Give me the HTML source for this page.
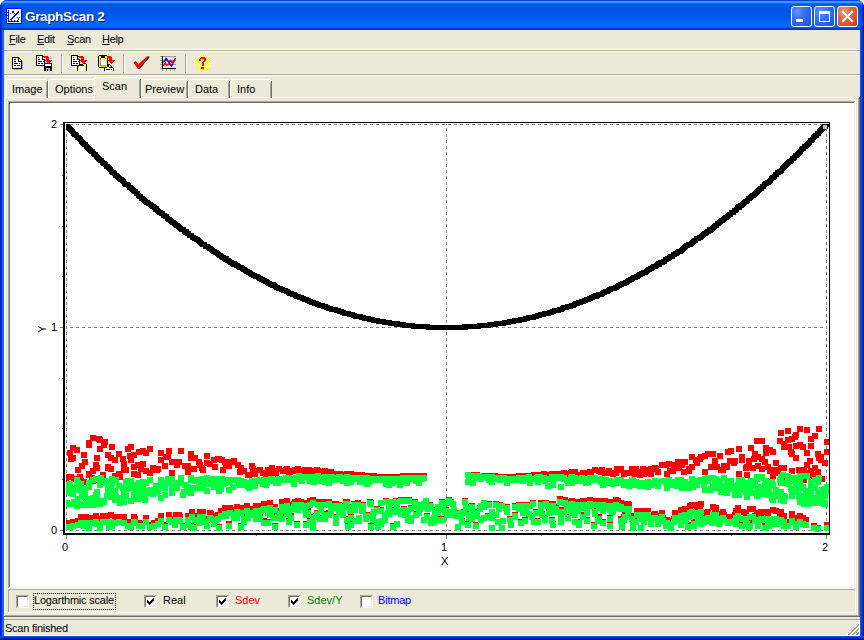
<!DOCTYPE html>
<html><head><meta charset="utf-8">
<style>
*{margin:0;padding:0;box-sizing:border-box}
html,body{width:864px;height:640px;overflow:hidden;background:linear-gradient(to right,#fff 50%,#ECE9D8 50%);font-family:"Liberation Sans",sans-serif;font-size:11px;color:#000}
.a{position:absolute}
#win{position:absolute;left:0;top:0;width:864px;height:640px;border-radius:7px 7px 0 0;overflow:hidden;background:#0831D9}
#title{position:absolute;left:0;top:0;width:864px;height:30px;
background:linear-gradient(to bottom,#0A46D9 0px,#0A46D9 1px,#3D95FF 1px,#3D95FF 3px,#0A6AF0 3px,#0058E8 5px,#0055E5 9px,#0058EA 16px,#0062F8 21px,#0066FF 23px,#0066FF 27px,#0050E0 28px,#0034C8 29px,#0034C8 30px)}
#lb{position:absolute;left:0;top:30px;width:4px;height:610px;background:linear-gradient(to right,#0019CF 0,#0019CF 1px,#0831D9 1px,#0831D9 2px,#166AEE 2px,#166AEE 3px,#1D5FE9 3px)}
#rb{position:absolute;left:860px;top:30px;width:4px;height:610px;background:linear-gradient(to right,#0A4BEA 0,#0A4BEA 1px,#0A45E6 1px,#0A45E6 2px,#0030C8 2px,#0030C8 3px,#001888 3px)}
#bb{position:absolute;left:0;top:636px;width:864px;height:4px;background:linear-gradient(to bottom,#0A4BEA 0,#0A4BEA 1px,#0837D8 1px,#0837D8 2px,#0020B0 2px,#0020B0 3px,#00138A 3px)}
#client{position:absolute;left:4px;top:30px;width:856px;height:606px;background:#ECE9D8}
.ttl{position:absolute;left:25px;top:9px;font-weight:bold;font-size:13.5px;letter-spacing:-0.35px;color:#fff;text-shadow:1px 1px 0 #0A1883}
.m{position:absolute;top:3px;white-space:nowrap;letter-spacing:-0.3px}
.u{text-decoration:underline;text-underline-offset:1px}
.hl{position:absolute;height:1px}
.vl{position:absolute;width:1px}
.tab{position:absolute;top:79px;height:19px;border-top:1px solid #fff;border-left:1px solid #fff;border-radius:2px 0 0 0}
.tab i{position:absolute;right:-1px;top:1px;bottom:0;width:1px;background:#716F64}
.tab i:before{content:"";position:absolute;left:-1px;top:1px;bottom:0;width:1px;background:#ACA899}
.tab span{position:absolute;top:3px;white-space:nowrap}
.cb{position:absolute;width:13px;height:13px;border-top:1px solid #ACA899;border-left:1px solid #ACA899;border-right:1px solid #fff;border-bottom:1px solid #fff;background:#fff}
.cb:before{content:"";position:absolute;left:0;top:0;right:0;bottom:0;border-top:1px solid #716F64;border-left:1px solid #716F64;border-right:1px solid #F1EFE2;border-bottom:1px solid #F1EFE2}
.lbl{position:absolute;white-space:nowrap}
</style></head><body>
<div id="win">
<div id="title">
 <svg class="a" style="left:6px;top:8px" width="16" height="16" viewBox="0 0 16 16" shape-rendering="crispEdges">
  <rect x="0" y="0" width="16" height="16" fill="#0000F0"/>
  <rect x="1" y="1" width="14" height="14" fill="#fff"/>
  <path fill="#0000F0" d="M1 4h1v1h-1zM1 7h1v1h-1zM1 10h1v1h-1zM2 2h1v12h-1zM2 13h11v1h-11zM5 12h1v1h-1zM8 12h1v1h-1zM11 12h1v1h-1zM4 11h2v1h-2zM5 10h2v1h-2zM6 9h2v1h-2zM7 8h2v1h-2zM8 7h2v1h-2zM9 6h2v1h-2zM10 5h2v1h-2zM11 4h2v1h-2zM12 3h1v1h-1zM6 3h2v2h-2zM4 5h1v1h-1zM8 5h1v1h-1zM11 9h1v1h-1zM13 9h1v1h-1zM12 10h1v2h-1z"/>
 </svg>
 <div class="ttl">GraphScan 2</div>
 <!-- buttons -->
 <div class="a" style="left:791px;top:6px;width:21px;height:21px;border:1px solid #fff;border-radius:3px;background:radial-gradient(circle at 30% 25%,#5F95FB 0%,#3A74F2 35%,#2159E8 80%,#1A4FDB 100%)"></div>
 <div class="a" style="left:796px;top:19px;width:7px;height:3px;background:#fff"></div>
 <div class="a" style="left:814px;top:6px;width:21px;height:21px;border:1px solid #fff;border-radius:3px;background:radial-gradient(circle at 30% 25%,#5F95FB 0%,#3A74F2 35%,#2159E8 80%,#1A4FDB 100%)"></div>
 <div class="a" style="left:819px;top:11px;width:11px;height:11px;border:1px solid #fff;border-top-width:3px"></div>
 <div class="a" style="left:837px;top:6px;width:21px;height:21px;border:1px solid #fff;border-radius:3px;background:radial-gradient(circle at 30% 25%,#EC9A80 0%,#E16C4C 35%,#D44A22 80%,#C0380F 100%)"></div>
 <svg class="a" style="left:837px;top:6px" width="21" height="21" viewBox="0 0 21 21"><path d="M6 6L15 15M15 6L6 15" stroke="#fff" stroke-width="2" stroke-linecap="square"/></svg>
</div>
<div class="a" style="left:0;top:5px;width:5px;height:25px;background:linear-gradient(to right,rgba(0,25,200,0.9),rgba(0,40,210,0.5) 2px,rgba(0,60,220,0) 5px)"></div>
<div class="a" style="left:859px;top:5px;width:5px;height:25px;background:linear-gradient(to left,rgba(0,16,140,0.9),rgba(0,40,200,0.5) 2px,rgba(0,60,220,0) 5px)"></div>
<div id="lb"></div><div id="rb"></div><div id="bb"></div>
<div id="client"></div>
<!-- corners outside window -->
<!-- menu bar -->
<div class="m" style="left:9px;top:33px"><span class="u">F</span>ile</div>
<div class="m" style="left:37px;top:33px"><span class="u">E</span>dit</div>
<div class="m" style="left:67px;top:33px"><span class="u">S</span>can</div>
<div class="m" style="left:102px;top:33px"><span class="u">H</span>elp</div>
<div class="hl" style="left:4px;top:49px;width:856px;background:#fff"></div>
<div class="hl" style="left:4px;top:50px;width:856px;background:#ACA899"></div>
<div class="hl" style="left:4px;top:51px;width:856px;background:#fff"></div>
<!-- toolbar bottom -->
<div class="hl" style="left:4px;top:74px;width:856px;background:#ACA899"></div>
<div class="hl" style="left:4px;top:75px;width:856px;background:#fff"></div>
<!-- toolbar separators -->
<div class="vl" style="left:61px;top:54px;height:19px;background:#ACA899"></div>
<div class="vl" style="left:62px;top:54px;height:19px;background:#fff"></div>
<div class="vl" style="left:123px;top:54px;height:19px;background:#ACA899"></div>
<div class="vl" style="left:124px;top:54px;height:19px;background:#fff"></div>
<div class="vl" style="left:185px;top:54px;height:19px;background:#ACA899"></div>
<div class="vl" style="left:186px;top:54px;height:19px;background:#fff"></div>
<svg class="a" style="left:0;top:50px" width="220" height="24" viewBox="0 50 220 24" shape-rendering="crispEdges">
 <defs>
  <pattern id="chk" width="2" height="2" patternUnits="userSpaceOnUse"><rect width="2" height="2" fill="#fff"/><rect width="1" height="1" fill="#FF0"/><rect x="1" y="1" width="1" height="1" fill="#FF0"/></pattern>
 </defs>
 <!-- icon1 new -->
 <path fill="#FFFF00" d="M9 55h1v1h-1zM10 56h1v1h-1zM11 57h1v1h-1zM16 55h1v2h-1zM24 55h1v1h-1zM23 56h1v1h-1zM22 57h1v1h-1zM21 58h1v1h-1zM9 63h3v1h-3zM22 63h3v1h-3zM10 69h1v1h-1zM11 68h1v1h-1zM16 69h2v2h-2zM22 68h1v1h-1zM23 69h1v1h-1zM24 70h1v1h-1z"/>
 <path fill="#A8A8C0" d="M13 69h10v1h-10zM22 61h1v8h-1z"/>
 <path fill="#fff" d="M13 58h5v10h-5zM18 61h3v7h-3zM19 59h1v2h-1z"/>
 <path fill="#000" d="M12 57h7v1h-7zM12 57h1v12h-1zM12 68h10v1h-10zM21 61h1v8h-1zM19 58h1v1h-1zM20 59h1v1h-1zM21 60h1v1h-1zM18 58h1v3h-1zM18 61h3v1h-3zM14 59h2v1h-2zM14 61h2v1h-2zM14 63h4v1h-4zM19 63h1v1h-1zM14 65h2v1h-2zM17 65h3v1h-3z"/>
 <!-- icon2 save -->
 <path fill="#fff" d="M37 56h5v9h-5zM42 59h2v6h-2zM42 57h1v2h-1z"/>
 <path fill="#000" d="M36 55h7v1h-7zM36 55h1v11h-1zM36 65h8v1h-8zM43 56h1v1h-1zM44 57h1v1h-1zM42 56h1v3h-1zM42 59h3v1h-3zM44 59h1v4h-1zM38 57h1v1h-1zM38 59h2v1h-2zM38 61h4v1h-4zM43 61h1v1h-1zM38 63h2v1h-2zM41 63h2v1h-2z"/>
 <path fill="#FF0000" d="M44 56h4v2h-4zM46 57h3v3h-3zM45 60h7v1h-7zM46 61h5v1h-5zM47 62h3v1h-3zM48 63h1v1h-1z"/>
 <path fill="#000" d="M44 63h8v8h-8z"/>
 <path fill="#0000FF" d="M45 63h3v1h-3zM49 63h2v1h-2z"/>
 <path fill="#FF0000" d="M48 63h1v1h-1z"/>
 <path fill="#fff" d="M45 64h6v2h-6z"/>
 <path fill="#B8B8B8" d="M46 68h4v3h-4z"/>
 <path fill="#000" d="M47 69h1v2h-1z"/>
 <!-- icon3 -->
 <path fill="#fff" d="M72 56h5v9h-5zM77 59h2v6h-2zM77 57h1v2h-1z"/>
 <path fill="#000" d="M71 55h7v1h-7zM71 55h1v11h-1zM71 65h8v1h-8zM78 56h1v1h-1zM79 57h1v1h-1zM77 56h1v3h-1zM77 59h3v1h-3zM79 59h1v7h-1zM73 57h1v1h-1zM73 59h2v1h-2zM73 61h4v1h-4zM78 61h1v1h-1zM73 63h2v1h-2zM76 63h2v1h-2z"/>
 <path fill="#FF0000" d="M79 56h4v2h-4zM81 57h3v3h-3zM80 60h7v1h-7zM81 61h5v1h-5zM82 62h3v1h-3zM83 63h1v1h-1z"/>
 <path fill="#000" d="M77 66h1v5h-1zM80 64h3v2h-3zM84 63h2v1h-2zM86 64h1v7h-1zM82 65h2v1h-2z"/>
 <path fill="#FFFF00" d="M78 66h1v5h-1zM85 64h1v7h-1zM84 64h1v1h-1z"/>
 <path fill="#fff" d="M79 66h6v5h-6z"/>
 <!-- icon4 clipboard -->
 <path fill="#000" d="M99 55h8v1h-8zM98 56h1v11h-1zM107 56h1v11h-1zM99 67h8v1h-8zM101 56h4v2h-4z"/>
 <path fill="#FFFF00" d="M99 56h2v2h-2zM105 56h2v2h-2zM99 58h8v9h-8z"/>
 <path fill="#8888B0" d="M100 58h1v1h-1zM105 58h1v1h-1zM100 59h1v7h-1zM100 65h6v1h-6z"/>
 <path fill="#fff" d="M101 59h5v6h-5z"/>
 <path fill="#FF0000" d="M107 56h4v2h-4zM109 57h3v3h-3zM108 60h7v1h-7zM109 61h5v1h-5zM110 62h3v1h-3zM111 63h1v1h-1z"/>
 <path fill="#fff" d="M105 68h8v3h-8zM108 65h3v3h-3z"/>
 <path fill="#000" d="M104 68h1v3h-1zM104 67h2v1h-2zM108 64h2v1h-2zM110 65h1v1h-1zM111 66h1v1h-1zM112 67h1v1h-1zM113 68h1v3h-1zM108 64h1v3h-1zM106 69h4v1h-4zM111 69h1v1h-1zM109 67h3v1h-3z"/>
 <path fill="#fff" d="M109 65h1v2h-1zM110 66h1v1h-1z"/>
 <!-- check -->
 <path d="M133.5 62.5L135.5 61L138.3 64.2L147.2 56.2L149.3 56.3L139.3 68.3L137.6 68.6Z" fill="#000" shape-rendering="geometricPrecision" transform="translate(0.6,0.5)"/>
 <path d="M133.5 62.5L135.5 61L138.3 64.2L147.2 56.2L149.3 56.3L139.3 68.3L137.6 68.6Z" fill="#FF0000" shape-rendering="geometricPrecision"/>
 <!-- chart icon -->
 <path fill="#999" d="M160 56h16v1h-16zM160 60h16v1h-16zM160 64h16v1h-16zM160 68h16v1h-16zM162 69h1v2h-1zM166 69h1v2h-1zM170 69h1v2h-1zM174 69h1v2h-1zM161 58h1v1h-1zM161 62h1v1h-1zM161 66h1v1h-1z"/>
 <path fill="#000" d="M162 56h1v13h-1zM162 68h14v1h-14z"/>
 <path d="M163.5 62.5L165 60.5L166 58.5L167.5 60.5L169 62.5L170.5 65L171.5 66L172.5 64L173.5 62L174.5 60L175.5 58" fill="none" stroke="#0000FF" stroke-width="1.5" shape-rendering="geometricPrecision"/>
 <path d="M163.5 66L164.5 64L165.5 63L166.5 65L168 65L169 62.5L170.5 60.5L171.5 61.5L172.5 63L173.5 61L175 60" fill="none" stroke="#FF0000" stroke-width="1.5" shape-rendering="geometricPrecision"/>
 <!-- help -->
 <path fill="url(#chk)" d="M200 55h5v1h2v1h1v1h1v1h1v2h1v5h-1v2h-1v1h-1v1h-1v1h-2v1h-5v-1h-2v-1h-1v-1h-1v-1h-1v-2h-1v-5h1v-2h1v-1h1v-1h1v-1h2z"/>
 <path fill="#FF0000" d="M201 57h4v1h-4zM200 58h6v1h-6zM199 59h2v2h-2zM204 59h2v2h-2zM203 61h2v1h-2zM202 62h2v1h-2zM202 63h2v3h-2zM201 67h3v2h-3z"/>
</svg>
<!-- tab page border -->
<div class="hl" style="left:4px;top:97px;width:90px;background:#fff"></div>
<div class="hl" style="left:140px;top:97px;width:719px;background:#fff"></div>
<div class="vl" style="left:4px;top:97px;height:519px;background:#fff"></div>
<div class="vl" style="left:858px;top:98px;height:518px;background:#ACA899"></div>
<div class="vl" style="left:859px;top:97px;height:520px;background:#716F64"></div>
<div class="hl" style="left:5px;top:615px;width:854px;background:#ACA899"></div>
<div class="hl" style="left:4px;top:616px;width:856px;background:#716F64"></div>
<!-- tabs -->
<div class="tab" style="left:6px;width:41px"><i></i><span style="left:5px">Image</span></div>
<div class="tab" style="left:48px;width:46px"><span style="left:6px">Options</span></div>
<div class="tab" style="left:141px;width:46px"><i></i><span style="left:3px">Preview</span></div>
<div class="tab" style="left:188px;width:41px"><i></i><span style="left:6px">Data</span></div>
<div class="tab" style="left:230px;width:41px"><i></i><span style="left:6px">Info</span></div>
<div class="tab" style="left:94px;top:77px;width:46px;height:21px;background:#ECE9D8"><i style="background:#716F64"></i><span style="left:7px;top:2px">Scan</span></div>
<!-- chart sunken frame -->
<div class="hl" style="left:8px;top:101px;width:847px;background:#ACA899"></div>
<div class="vl" style="left:8px;top:101px;height:487px;background:#ACA899"></div>
<div class="hl" style="left:9px;top:102px;width:845px;background:#716F64"></div>
<div class="vl" style="left:9px;top:102px;height:485px;background:#716F64"></div>
<div class="hl" style="left:8px;top:588px;width:848px;background:#fff"></div>
<div class="vl" style="left:855px;top:101px;height:488px;background:#fff"></div>
<div class="hl" style="left:9px;top:587px;width:846px;background:#F1EFE2"></div>
<div class="vl" style="left:854px;top:102px;height:486px;background:#F1EFE2"></div>
<div class="a" style="left:10px;top:103px;width:844px;height:484px;background:#fff"></div>
<!-- checkbox panel -->
<div class="hl" style="left:8px;top:589px;width:847px;background:#ACA899"></div>
<div class="vl" style="left:8px;top:589px;height:23px;background:#ACA899"></div>
<div class="hl" style="left:8px;top:612px;width:848px;background:#fff"></div>
<div class="vl" style="left:855px;top:589px;height:24px;background:#fff"></div>
<div class="cb" style="left:16px;top:595px"></div>
<div class="a" style="left:33px;top:593px;width:83px;height:17px;border:1px dotted #000"></div>
<div class="lbl" style="left:34px;top:594px;letter-spacing:-0.2px">Logarthmic scale</div>
<div class="cb" style="left:144px;top:595px"><svg class="a" style="left:2px;top:2px" width="7" height="7" viewBox="0 0 7 7" shape-rendering="crispEdges"><path d="M0 2h1v3h-1zM1 3h1v3h-1zM2 4h1v3h-1zM3 3h1v3h-1zM4 2h1v3h-1zM5 1h1v3h-1zM6 0h1v3h-1z"/></svg></div>
<div class="lbl" style="left:163px;top:594px">Real</div>
<div class="cb" style="left:216px;top:595px"><svg class="a" style="left:2px;top:2px" width="7" height="7" viewBox="0 0 7 7" shape-rendering="crispEdges"><path d="M0 2h1v3h-1zM1 3h1v3h-1zM2 4h1v3h-1zM3 3h1v3h-1zM4 2h1v3h-1zM5 1h1v3h-1zM6 0h1v3h-1z"/></svg></div>
<div class="lbl" style="left:235px;top:594px;color:#FF0000">Sdev</div>
<div class="cb" style="left:288px;top:595px"><svg class="a" style="left:2px;top:2px" width="7" height="7" viewBox="0 0 7 7" shape-rendering="crispEdges"><path d="M0 2h1v3h-1zM1 3h1v3h-1zM2 4h1v3h-1zM3 3h1v3h-1zM4 2h1v3h-1zM5 1h1v3h-1zM6 0h1v3h-1z"/></svg></div>
<div class="lbl" style="left:307px;top:594px;color:#008000">Sdev/Y</div>
<div class="cb" style="left:360px;top:595px"></div>
<div class="lbl" style="left:378px;top:594px;color:#0000FF;letter-spacing:-0.2px">Bitmap</div>
<!-- status bar -->
<div class="hl" style="left:4px;top:619px;width:856px;background:#ACA899"></div>
<div class="hl" style="left:4px;top:635px;width:856px;background:#fff"></div>
<div class="lbl" style="left:5px;top:622px;letter-spacing:-0.25px">Scan finished</div>
<svg class="a" style="left:0;top:0" width="864" height="640" viewBox="0 0 864 640" shape-rendering="crispEdges"><path fill="#fff" d="M847 634h1v1h-1zM848 633h1v1h-1zM849 632h1v1h-1zM850 631h1v1h-1zM851 630h1v1h-1zM852 629h1v1h-1zM853 628h1v1h-1zM854 627h1v1h-1zM855 626h1v1h-1zM856 625h1v1h-1zM857 624h1v1h-1zM858 623h1v1h-1zM851 634h1v1h-1zM852 633h1v1h-1zM853 632h1v1h-1zM854 631h1v1h-1zM855 630h1v1h-1zM856 629h1v1h-1zM857 628h1v1h-1zM858 627h1v1h-1zM855 634h1v1h-1zM856 633h1v1h-1zM857 632h1v1h-1zM858 631h1v1h-1zM859 620h1v15h-1z"/><path fill="#ACA899" d="M848 634h1v1h-1zM849 634h1v1h-1zM849 633h1v1h-1zM850 633h1v1h-1zM850 632h1v1h-1zM851 632h1v1h-1zM851 631h1v1h-1zM852 631h1v1h-1zM852 630h1v1h-1zM853 630h1v1h-1zM853 629h1v1h-1zM854 629h1v1h-1zM854 628h1v1h-1zM855 628h1v1h-1zM855 627h1v1h-1zM856 627h1v1h-1zM856 626h1v1h-1zM857 626h1v1h-1zM857 625h1v1h-1zM858 625h1v1h-1zM858 624h1v1h-1zM852 634h1v1h-1zM853 634h1v1h-1zM853 633h1v1h-1zM854 633h1v1h-1zM854 632h1v1h-1zM855 632h1v1h-1zM855 631h1v1h-1zM856 631h1v1h-1zM856 630h1v1h-1zM857 630h1v1h-1zM857 629h1v1h-1zM858 629h1v1h-1zM858 628h1v1h-1zM856 634h1v1h-1zM857 634h1v1h-1zM857 633h1v1h-1zM858 633h1v1h-1zM858 632h1v1h-1z"/></svg>
<svg class="a" style="left:0;top:0" width="864" height="640" viewBox="0 0 864 640" shape-rendering="crispEdges">
<defs><clipPath id="pc"><rect x="66" y="124" width="763" height="409"/></clipPath></defs>
<path fill="#808080" d="M70 124h3v1h-3zM76 124h3v1h-3zM82 124h3v1h-3zM88 124h3v1h-3zM94 124h3v1h-3zM100 124h3v1h-3zM106 124h3v1h-3zM112 124h3v1h-3zM118 124h3v1h-3zM124 124h3v1h-3zM130 124h3v1h-3zM136 124h3v1h-3zM142 124h3v1h-3zM148 124h3v1h-3zM154 124h3v1h-3zM160 124h3v1h-3zM166 124h3v1h-3zM172 124h3v1h-3zM178 124h3v1h-3zM184 124h3v1h-3zM190 124h3v1h-3zM196 124h3v1h-3zM202 124h3v1h-3zM208 124h3v1h-3zM214 124h3v1h-3zM220 124h3v1h-3zM226 124h3v1h-3zM232 124h3v1h-3zM238 124h3v1h-3zM244 124h3v1h-3zM250 124h3v1h-3zM256 124h3v1h-3zM262 124h3v1h-3zM268 124h3v1h-3zM274 124h3v1h-3zM280 124h3v1h-3zM286 124h3v1h-3zM292 124h3v1h-3zM298 124h3v1h-3zM304 124h3v1h-3zM310 124h3v1h-3zM316 124h3v1h-3zM322 124h3v1h-3zM328 124h3v1h-3zM334 124h3v1h-3zM340 124h3v1h-3zM346 124h3v1h-3zM352 124h3v1h-3zM358 124h3v1h-3zM364 124h3v1h-3zM370 124h3v1h-3zM376 124h3v1h-3zM382 124h3v1h-3zM388 124h3v1h-3zM394 124h3v1h-3zM400 124h3v1h-3zM406 124h3v1h-3zM412 124h3v1h-3zM418 124h3v1h-3zM424 124h3v1h-3zM430 124h3v1h-3zM436 124h3v1h-3zM442 124h3v1h-3zM448 124h3v1h-3zM454 124h3v1h-3zM460 124h3v1h-3zM466 124h3v1h-3zM472 124h3v1h-3zM478 124h3v1h-3zM484 124h3v1h-3zM490 124h3v1h-3zM496 124h3v1h-3zM502 124h3v1h-3zM508 124h3v1h-3zM514 124h3v1h-3zM520 124h3v1h-3zM526 124h3v1h-3zM532 124h3v1h-3zM538 124h3v1h-3zM544 124h3v1h-3zM550 124h3v1h-3zM556 124h3v1h-3zM562 124h3v1h-3zM568 124h3v1h-3zM574 124h3v1h-3zM580 124h3v1h-3zM586 124h3v1h-3zM592 124h3v1h-3zM598 124h3v1h-3zM604 124h3v1h-3zM610 124h3v1h-3zM616 124h3v1h-3zM622 124h3v1h-3zM628 124h3v1h-3zM634 124h3v1h-3zM640 124h3v1h-3zM646 124h3v1h-3zM652 124h3v1h-3zM658 124h3v1h-3zM664 124h3v1h-3zM670 124h3v1h-3zM676 124h3v1h-3zM682 124h3v1h-3zM688 124h3v1h-3zM694 124h3v1h-3zM700 124h3v1h-3zM706 124h3v1h-3zM712 124h3v1h-3zM718 124h3v1h-3zM724 124h3v1h-3zM730 124h3v1h-3zM736 124h3v1h-3zM742 124h3v1h-3zM748 124h3v1h-3zM754 124h3v1h-3zM760 124h3v1h-3zM766 124h3v1h-3zM772 124h3v1h-3zM778 124h3v1h-3zM784 124h3v1h-3zM790 124h3v1h-3zM796 124h3v1h-3zM802 124h3v1h-3zM808 124h3v1h-3zM814 124h3v1h-3zM820 124h3v1h-3zM826 124h1v1h-1zM70 327h3v1h-3zM76 327h3v1h-3zM82 327h3v1h-3zM88 327h3v1h-3zM94 327h3v1h-3zM100 327h3v1h-3zM106 327h3v1h-3zM112 327h3v1h-3zM118 327h3v1h-3zM124 327h3v1h-3zM130 327h3v1h-3zM136 327h3v1h-3zM142 327h3v1h-3zM148 327h3v1h-3zM154 327h3v1h-3zM160 327h3v1h-3zM166 327h3v1h-3zM172 327h3v1h-3zM178 327h3v1h-3zM184 327h3v1h-3zM190 327h3v1h-3zM196 327h3v1h-3zM202 327h3v1h-3zM208 327h3v1h-3zM214 327h3v1h-3zM220 327h3v1h-3zM226 327h3v1h-3zM232 327h3v1h-3zM238 327h3v1h-3zM244 327h3v1h-3zM250 327h3v1h-3zM256 327h3v1h-3zM262 327h3v1h-3zM268 327h3v1h-3zM274 327h3v1h-3zM280 327h3v1h-3zM286 327h3v1h-3zM292 327h3v1h-3zM298 327h3v1h-3zM304 327h3v1h-3zM310 327h3v1h-3zM316 327h3v1h-3zM322 327h3v1h-3zM328 327h3v1h-3zM334 327h3v1h-3zM340 327h3v1h-3zM346 327h3v1h-3zM352 327h3v1h-3zM358 327h3v1h-3zM364 327h3v1h-3zM370 327h3v1h-3zM376 327h3v1h-3zM382 327h3v1h-3zM388 327h3v1h-3zM394 327h3v1h-3zM400 327h3v1h-3zM406 327h3v1h-3zM412 327h3v1h-3zM418 327h3v1h-3zM424 327h3v1h-3zM430 327h3v1h-3zM436 327h3v1h-3zM442 327h3v1h-3zM448 327h3v1h-3zM454 327h3v1h-3zM460 327h3v1h-3zM466 327h3v1h-3zM472 327h3v1h-3zM478 327h3v1h-3zM484 327h3v1h-3zM490 327h3v1h-3zM496 327h3v1h-3zM502 327h3v1h-3zM508 327h3v1h-3zM514 327h3v1h-3zM520 327h3v1h-3zM526 327h3v1h-3zM532 327h3v1h-3zM538 327h3v1h-3zM544 327h3v1h-3zM550 327h3v1h-3zM556 327h3v1h-3zM562 327h3v1h-3zM568 327h3v1h-3zM574 327h3v1h-3zM580 327h3v1h-3zM586 327h3v1h-3zM592 327h3v1h-3zM598 327h3v1h-3zM604 327h3v1h-3zM610 327h3v1h-3zM616 327h3v1h-3zM622 327h3v1h-3zM628 327h3v1h-3zM634 327h3v1h-3zM640 327h3v1h-3zM646 327h3v1h-3zM652 327h3v1h-3zM658 327h3v1h-3zM664 327h3v1h-3zM670 327h3v1h-3zM676 327h3v1h-3zM682 327h3v1h-3zM688 327h3v1h-3zM694 327h3v1h-3zM700 327h3v1h-3zM706 327h3v1h-3zM712 327h3v1h-3zM718 327h3v1h-3zM724 327h3v1h-3zM730 327h3v1h-3zM736 327h3v1h-3zM742 327h3v1h-3zM748 327h3v1h-3zM754 327h3v1h-3zM760 327h3v1h-3zM766 327h3v1h-3zM772 327h3v1h-3zM778 327h3v1h-3zM784 327h3v1h-3zM790 327h3v1h-3zM796 327h3v1h-3zM802 327h3v1h-3zM808 327h3v1h-3zM814 327h3v1h-3zM820 327h3v1h-3zM826 327h1v1h-1zM70 530h3v1h-3zM76 530h3v1h-3zM82 530h3v1h-3zM88 530h3v1h-3zM94 530h3v1h-3zM100 530h3v1h-3zM106 530h3v1h-3zM112 530h3v1h-3zM118 530h3v1h-3zM124 530h3v1h-3zM130 530h3v1h-3zM136 530h3v1h-3zM142 530h3v1h-3zM148 530h3v1h-3zM154 530h3v1h-3zM160 530h3v1h-3zM166 530h3v1h-3zM172 530h3v1h-3zM178 530h3v1h-3zM184 530h3v1h-3zM190 530h3v1h-3zM196 530h3v1h-3zM202 530h3v1h-3zM208 530h3v1h-3zM214 530h3v1h-3zM220 530h3v1h-3zM226 530h3v1h-3zM232 530h3v1h-3zM238 530h3v1h-3zM244 530h3v1h-3zM250 530h3v1h-3zM256 530h3v1h-3zM262 530h3v1h-3zM268 530h3v1h-3zM274 530h3v1h-3zM280 530h3v1h-3zM286 530h3v1h-3zM292 530h3v1h-3zM298 530h3v1h-3zM304 530h3v1h-3zM310 530h3v1h-3zM316 530h3v1h-3zM322 530h3v1h-3zM328 530h3v1h-3zM334 530h3v1h-3zM340 530h3v1h-3zM346 530h3v1h-3zM352 530h3v1h-3zM358 530h3v1h-3zM364 530h3v1h-3zM370 530h3v1h-3zM376 530h3v1h-3zM382 530h3v1h-3zM388 530h3v1h-3zM394 530h3v1h-3zM400 530h3v1h-3zM406 530h3v1h-3zM412 530h3v1h-3zM418 530h3v1h-3zM424 530h3v1h-3zM430 530h3v1h-3zM436 530h3v1h-3zM442 530h3v1h-3zM448 530h3v1h-3zM454 530h3v1h-3zM460 530h3v1h-3zM466 530h3v1h-3zM472 530h3v1h-3zM478 530h3v1h-3zM484 530h3v1h-3zM490 530h3v1h-3zM496 530h3v1h-3zM502 530h3v1h-3zM508 530h3v1h-3zM514 530h3v1h-3zM520 530h3v1h-3zM526 530h3v1h-3zM532 530h3v1h-3zM538 530h3v1h-3zM544 530h3v1h-3zM550 530h3v1h-3zM556 530h3v1h-3zM562 530h3v1h-3zM568 530h3v1h-3zM574 530h3v1h-3zM580 530h3v1h-3zM586 530h3v1h-3zM592 530h3v1h-3zM598 530h3v1h-3zM604 530h3v1h-3zM610 530h3v1h-3zM616 530h3v1h-3zM622 530h3v1h-3zM628 530h3v1h-3zM634 530h3v1h-3zM640 530h3v1h-3zM646 530h3v1h-3zM652 530h3v1h-3zM658 530h3v1h-3zM664 530h3v1h-3zM670 530h3v1h-3zM676 530h3v1h-3zM682 530h3v1h-3zM688 530h3v1h-3zM694 530h3v1h-3zM700 530h3v1h-3zM706 530h3v1h-3zM712 530h3v1h-3zM718 530h3v1h-3zM724 530h3v1h-3zM730 530h3v1h-3zM736 530h3v1h-3zM742 530h3v1h-3zM748 530h3v1h-3zM754 530h3v1h-3zM760 530h3v1h-3zM766 530h3v1h-3zM772 530h3v1h-3zM778 530h3v1h-3zM784 530h3v1h-3zM790 530h3v1h-3zM796 530h3v1h-3zM802 530h3v1h-3zM808 530h3v1h-3zM814 530h3v1h-3zM820 530h3v1h-3zM826 530h1v1h-1zM66 124h1v1h-1zM66 128h1v3h-1zM66 134h1v3h-1zM66 140h1v3h-1zM66 146h1v3h-1zM66 152h1v3h-1zM66 158h1v3h-1zM66 164h1v3h-1zM66 170h1v3h-1zM66 176h1v3h-1zM66 182h1v3h-1zM66 188h1v3h-1zM66 194h1v3h-1zM66 200h1v3h-1zM66 206h1v3h-1zM66 212h1v3h-1zM66 218h1v3h-1zM66 224h1v3h-1zM66 230h1v3h-1zM66 236h1v3h-1zM66 242h1v3h-1zM66 248h1v3h-1zM66 254h1v3h-1zM66 260h1v3h-1zM66 266h1v3h-1zM66 272h1v3h-1zM66 278h1v3h-1zM66 284h1v3h-1zM66 290h1v3h-1zM66 296h1v3h-1zM66 302h1v3h-1zM66 308h1v3h-1zM66 314h1v3h-1zM66 320h1v3h-1zM66 326h1v3h-1zM66 332h1v3h-1zM66 338h1v3h-1zM66 344h1v3h-1zM66 350h1v3h-1zM66 356h1v3h-1zM66 362h1v3h-1zM66 368h1v3h-1zM66 374h1v3h-1zM66 380h1v3h-1zM66 386h1v3h-1zM66 392h1v3h-1zM66 398h1v3h-1zM66 404h1v3h-1zM66 410h1v3h-1zM66 416h1v3h-1zM66 422h1v3h-1zM66 428h1v3h-1zM66 434h1v3h-1zM66 440h1v3h-1zM66 446h1v3h-1zM66 452h1v3h-1zM66 458h1v3h-1zM66 464h1v3h-1zM66 470h1v3h-1zM66 476h1v3h-1zM66 482h1v3h-1zM66 488h1v3h-1zM66 494h1v3h-1zM66 500h1v3h-1zM66 506h1v3h-1zM66 512h1v3h-1zM66 518h1v3h-1zM66 524h1v3h-1zM66 530h1v1h-1zM446 124h1v1h-1zM446 128h1v3h-1zM446 134h1v3h-1zM446 140h1v3h-1zM446 146h1v3h-1zM446 152h1v3h-1zM446 158h1v3h-1zM446 164h1v3h-1zM446 170h1v3h-1zM446 176h1v3h-1zM446 182h1v3h-1zM446 188h1v3h-1zM446 194h1v3h-1zM446 200h1v3h-1zM446 206h1v3h-1zM446 212h1v3h-1zM446 218h1v3h-1zM446 224h1v3h-1zM446 230h1v3h-1zM446 236h1v3h-1zM446 242h1v3h-1zM446 248h1v3h-1zM446 254h1v3h-1zM446 260h1v3h-1zM446 266h1v3h-1zM446 272h1v3h-1zM446 278h1v3h-1zM446 284h1v3h-1zM446 290h1v3h-1zM446 296h1v3h-1zM446 302h1v3h-1zM446 308h1v3h-1zM446 314h1v3h-1zM446 320h1v3h-1zM446 326h1v3h-1zM446 332h1v3h-1zM446 338h1v3h-1zM446 344h1v3h-1zM446 350h1v3h-1zM446 356h1v3h-1zM446 362h1v3h-1zM446 368h1v3h-1zM446 374h1v3h-1zM446 380h1v3h-1zM446 386h1v3h-1zM446 392h1v3h-1zM446 398h1v3h-1zM446 404h1v3h-1zM446 410h1v3h-1zM446 416h1v3h-1zM446 422h1v3h-1zM446 428h1v3h-1zM446 434h1v3h-1zM446 440h1v3h-1zM446 446h1v3h-1zM446 452h1v3h-1zM446 458h1v3h-1zM446 464h1v3h-1zM446 470h1v3h-1zM446 476h1v3h-1zM446 482h1v3h-1zM446 488h1v3h-1zM446 494h1v3h-1zM446 500h1v3h-1zM446 506h1v3h-1zM446 512h1v3h-1zM446 518h1v3h-1zM446 524h1v3h-1zM446 530h1v1h-1zM826 124h1v1h-1zM826 128h1v3h-1zM826 134h1v3h-1zM826 140h1v3h-1zM826 146h1v3h-1zM826 152h1v3h-1zM826 158h1v3h-1zM826 164h1v3h-1zM826 170h1v3h-1zM826 176h1v3h-1zM826 182h1v3h-1zM826 188h1v3h-1zM826 194h1v3h-1zM826 200h1v3h-1zM826 206h1v3h-1zM826 212h1v3h-1zM826 218h1v3h-1zM826 224h1v3h-1zM826 230h1v3h-1zM826 236h1v3h-1zM826 242h1v3h-1zM826 248h1v3h-1zM826 254h1v3h-1zM826 260h1v3h-1zM826 266h1v3h-1zM826 272h1v3h-1zM826 278h1v3h-1zM826 284h1v3h-1zM826 290h1v3h-1zM826 296h1v3h-1zM826 302h1v3h-1zM826 308h1v3h-1zM826 314h1v3h-1zM826 320h1v3h-1zM826 326h1v3h-1zM826 332h1v3h-1zM826 338h1v3h-1zM826 344h1v3h-1zM826 350h1v3h-1zM826 356h1v3h-1zM826 362h1v3h-1zM826 368h1v3h-1zM826 374h1v3h-1zM826 380h1v3h-1zM826 386h1v3h-1zM826 392h1v3h-1zM826 398h1v3h-1zM826 404h1v3h-1zM826 410h1v3h-1zM826 416h1v3h-1zM826 422h1v3h-1zM826 428h1v3h-1zM826 434h1v3h-1zM826 440h1v3h-1zM826 446h1v3h-1zM826 452h1v3h-1zM826 458h1v3h-1zM826 464h1v3h-1zM826 470h1v3h-1zM826 476h1v3h-1zM826 482h1v3h-1zM826 488h1v3h-1zM826 494h1v3h-1zM826 500h1v3h-1zM826 506h1v3h-1zM826 512h1v3h-1zM826 518h1v3h-1zM826 524h1v3h-1zM826 530h1v1h-1z"/>
<path fill="#808080" d="M60 124h3v1h-3zM60 327h3v1h-3zM60 530h3v1h-3zM62 479h1v1h-1zM62 428h1v1h-1zM62 378h1v1h-1zM62 276h1v1h-1zM62 226h1v1h-1zM62 175h1v1h-1zM66 535h1v4h-1zM446 535h1v4h-1zM826 535h1v4h-1zM161 535h1v1h-1zM256 535h1v1h-1zM351 535h1v1h-1zM541 535h1v1h-1zM636 535h1v1h-1zM731 535h1v1h-1z"/>
<g clip-path="url(#pc)">
<path fill="#000" d="M63 122h5v5h-5zM64 124h5v5h-5zM65 124h5v5h-5zM66 125h5v5h-5zM67 126h5v5h-5zM68 127h5v5h-5zM69 128h5v5h-5zM70 129h5v5h-5zM71 131h5v5h-5zM72 132h5v5h-5zM73 132h5v5h-5zM74 133h5v5h-5zM75 135h5v5h-5zM76 135h5v5h-5zM77 136h5v5h-5zM78 137h5v5h-5zM79 139h5v5h-5zM80 140h5v5h-5zM81 141h5v5h-5zM82 142h5v5h-5zM83 142h5v5h-5zM84 144h5v5h-5zM85 145h5v5h-5zM86 146h5v5h-5zM87 147h5v5h-5zM88 148h5v5h-5zM89 149h5v5h-5zM90 149h5v5h-5zM91 151h5v5h-5zM92 152h5v5h-5zM93 152h5v5h-5zM94 154h5v5h-5zM95 155h5v5h-5zM96 156h5v5h-5zM97 157h5v5h-5zM98 158h5v5h-5zM99 158h5v5h-5zM100 160h5v5h-5zM101 161h5v5h-5zM102 161h5v5h-5zM103 162h5v5h-5zM104 164h5v5h-5zM105 164h5v5h-5zM106 165h5v5h-5zM107 166h5v5h-5zM108 167h5v5h-5zM109 169h5v5h-5zM110 170h5v5h-5zM111 170h5v5h-5zM112 171h5v5h-5zM113 173h5v5h-5zM114 173h5v5h-5zM115 174h5v5h-5zM116 175h5v5h-5zM117 176h5v5h-5zM118 177h5v5h-5zM119 177h5v5h-5zM120 178h5v5h-5zM121 179h5v5h-5zM122 181h5v5h-5zM123 182h5v5h-5zM124 182h5v5h-5zM125 182h5v5h-5zM126 183h5v5h-5zM127 185h5v5h-5zM128 185h5v5h-5zM129 186h5v5h-5zM130 187h5v5h-5zM131 188h5v5h-5zM132 189h5v5h-5zM133 189h5v5h-5zM134 191h5v5h-5zM135 191h5v5h-5zM136 193h5v5h-5zM137 194h5v5h-5zM138 194h5v5h-5zM139 196h5v5h-5zM140 196h5v5h-5zM141 197h5v5h-5zM142 198h5v5h-5zM143 199h5v5h-5zM144 200h5v5h-5zM145 200h5v5h-5zM146 201h5v5h-5zM148 202h5v5h-5zM149 203h5v5h-5zM150 204h5v5h-5zM151 204h5v5h-5zM152 205h5v5h-5zM153 207h5v5h-5zM154 206h5v5h-5zM155 208h5v5h-5zM156 209h5v5h-5zM157 210h5v5h-5zM158 210h5v5h-5zM159 211h5v5h-5zM160 211h5v5h-5zM161 213h5v5h-5zM162 213h5v5h-5zM163 214h5v5h-5zM164 214h5v5h-5zM165 216h5v5h-5zM166 217h5v5h-5zM167 217h5v5h-5zM168 218h5v5h-5zM169 219h5v5h-5zM170 220h5v5h-5zM171 220h5v5h-5zM172 221h5v5h-5zM173 222h5v5h-5zM174 223h5v5h-5zM175 223h5v5h-5zM176 224h5v5h-5zM177 225h5v5h-5zM178 226h5v5h-5zM179 227h5v5h-5zM180 227h5v5h-5zM181 227h5v5h-5zM182 229h5v5h-5zM183 230h5v5h-5zM184 229h5v5h-5zM185 231h5v5h-5zM186 231h5v5h-5zM187 233h5v5h-5zM188 233h5v5h-5zM189 233h5v5h-5zM190 235h5v5h-5zM191 235h5v5h-5zM192 236h5v5h-5zM193 236h5v5h-5zM194 237h5v5h-5zM195 237h5v5h-5zM196 238h5v5h-5zM197 239h5v5h-5zM198 240h5v5h-5zM199 241h5v5h-5zM200 242h5v5h-5zM201 242h5v5h-5zM202 242h5v5h-5zM203 244h5v5h-5zM204 244h5v5h-5zM205 244h5v5h-5zM206 245h5v5h-5zM207 246h5v5h-5zM208 246h5v5h-5zM209 247h5v5h-5zM210 248h5v5h-5zM211 249h5v5h-5zM212 249h5v5h-5zM213 250h5v5h-5zM214 250h5v5h-5zM215 251h5v5h-5zM216 252h5v5h-5zM217 253h5v5h-5zM218 253h5v5h-5zM219 254h5v5h-5zM220 255h5v5h-5zM221 255h5v5h-5zM222 256h5v5h-5zM223 257h5v5h-5zM224 256h5v5h-5zM225 258h5v5h-5zM226 258h5v5h-5zM227 259h5v5h-5zM228 260h5v5h-5zM229 260h5v5h-5zM230 261h5v5h-5zM231 262h5v5h-5zM232 261h5v5h-5zM233 262h5v5h-5zM234 263h5v5h-5zM235 263h5v5h-5zM236 264h5v5h-5zM237 265h5v5h-5zM238 265h5v5h-5zM239 265h5v5h-5zM240 266h5v5h-5zM241 267h5v5h-5zM242 267h5v5h-5zM243 268h5v5h-5zM244 269h5v5h-5zM245 269h5v5h-5zM246 270h5v5h-5zM247 270h5v5h-5zM248 271h5v5h-5zM249 272h5v5h-5zM250 272h5v5h-5zM251 273h5v5h-5zM252 273h5v5h-5zM253 274h5v5h-5zM254 274h5v5h-5zM255 274h5v5h-5zM256 275h5v5h-5zM257 276h5v5h-5zM258 276h5v5h-5zM259 277h5v5h-5zM260 277h5v5h-5zM261 278h5v5h-5zM262 278h5v5h-5zM263 279h5v5h-5zM264 279h5v5h-5zM265 280h5v5h-5zM266 281h5v5h-5zM267 281h5v5h-5zM268 282h5v5h-5zM269 282h5v5h-5zM270 283h5v5h-5zM271 282h5v5h-5zM272 283h5v5h-5zM273 284h5v5h-5zM274 285h5v5h-5zM275 285h5v5h-5zM276 286h5v5h-5zM277 286h5v5h-5zM278 286h5v5h-5zM279 287h5v5h-5zM280 287h5v5h-5zM281 288h5v5h-5zM282 288h5v5h-5zM283 288h5v5h-5zM284 289h5v5h-5zM285 289h5v5h-5zM286 290h5v5h-5zM287 291h5v5h-5zM288 291h5v5h-5zM289 291h5v5h-5zM290 292h5v5h-5zM291 292h5v5h-5zM292 292h5v5h-5zM293 293h5v5h-5zM294 294h5v5h-5zM295 294h5v5h-5zM296 294h5v5h-5zM297 295h5v5h-5zM298 295h5v5h-5zM299 295h5v5h-5zM300 296h5v5h-5zM301 296h5v5h-5zM302 297h5v5h-5zM303 297h5v5h-5zM304 297h5v5h-5zM305 298h5v5h-5zM306 298h5v5h-5zM307 299h5v5h-5zM308 299h5v5h-5zM309 300h5v5h-5zM310 300h5v5h-5zM311 300h5v5h-5zM312 301h5v5h-5zM313 301h5v5h-5zM314 301h5v5h-5zM315 302h5v5h-5zM316 302h5v5h-5zM317 303h5v5h-5zM318 303h5v5h-5zM319 303h5v5h-5zM320 303h5v5h-5zM321 304h5v5h-5zM322 304h5v5h-5zM323 304h5v5h-5zM324 305h5v5h-5zM325 305h5v5h-5zM326 306h5v5h-5zM327 306h5v5h-5zM328 306h5v5h-5zM329 307h5v5h-5zM330 307h5v5h-5zM331 307h5v5h-5zM332 307h5v5h-5zM333 307h5v5h-5zM334 308h5v5h-5zM335 308h5v5h-5zM336 308h5v5h-5zM337 309h5v5h-5zM338 309h5v5h-5zM339 309h5v5h-5zM340 310h5v5h-5zM341 310h5v5h-5zM342 311h5v5h-5zM343 311h5v5h-5zM344 311h5v5h-5zM345 311h5v5h-5zM346 311h5v5h-5zM347 312h5v5h-5zM348 312h5v5h-5zM349 312h5v5h-5zM350 312h5v5h-5zM351 313h5v5h-5zM352 313h5v5h-5zM353 314h5v5h-5zM354 314h5v5h-5zM355 314h5v5h-5zM356 314h5v5h-5zM357 314h5v5h-5zM358 314h5v5h-5zM359 315h5v5h-5zM360 315h5v5h-5zM361 315h5v5h-5zM362 316h5v5h-5zM363 316h5v5h-5zM364 316h5v5h-5zM365 316h5v5h-5zM366 316h5v5h-5zM367 317h5v5h-5zM368 317h5v5h-5zM369 317h5v5h-5zM370 317h5v5h-5zM371 318h5v5h-5zM372 318h5v5h-5zM373 318h5v5h-5zM374 318h5v5h-5zM375 318h5v5h-5zM376 319h5v5h-5zM377 319h5v5h-5zM378 319h5v5h-5zM379 319h5v5h-5zM380 319h5v5h-5zM381 319h5v5h-5zM382 320h5v5h-5zM383 320h5v5h-5zM384 320h5v5h-5zM385 320h5v5h-5zM386 320h5v5h-5zM387 320h5v5h-5zM388 321h5v5h-5zM389 321h5v5h-5zM390 321h5v5h-5zM391 321h5v5h-5zM392 321h5v5h-5zM393 321h5v5h-5zM394 322h5v5h-5zM395 321h5v5h-5zM396 322h5v5h-5zM397 322h5v5h-5zM398 322h5v5h-5zM399 322h5v5h-5zM400 322h5v5h-5zM401 322h5v5h-5zM402 323h5v5h-5zM403 323h5v5h-5zM404 323h5v5h-5zM405 323h5v5h-5zM406 323h5v5h-5zM407 323h5v5h-5zM408 323h5v5h-5zM409 323h5v5h-5zM410 323h5v5h-5zM411 324h5v5h-5zM412 324h5v5h-5zM413 324h5v5h-5zM414 324h5v5h-5zM415 324h5v5h-5zM416 324h5v5h-5zM417 324h5v5h-5zM418 324h5v5h-5zM419 324h5v5h-5zM420 324h5v5h-5zM421 324h5v5h-5zM422 324h5v5h-5zM423 324h5v5h-5zM424 324h5v5h-5zM425 324h5v5h-5zM426 325h5v5h-5zM427 325h5v5h-5zM428 325h5v5h-5zM429 325h5v5h-5zM430 325h5v5h-5zM431 325h5v5h-5zM432 325h5v5h-5zM433 325h5v5h-5zM434 325h5v5h-5zM435 325h5v5h-5zM436 325h5v5h-5zM437 325h5v5h-5zM438 325h5v5h-5zM439 325h5v5h-5zM440 325h5v5h-5zM441 325h5v5h-5zM442 325h5v5h-5zM443 325h5v5h-5zM444 325h5v5h-5zM445 325h5v5h-5zM446 325h5v5h-5zM447 325h5v5h-5zM448 325h5v5h-5zM449 325h5v5h-5zM450 325h5v5h-5zM451 325h5v5h-5zM452 325h5v5h-5zM453 325h5v5h-5zM454 325h5v5h-5zM455 325h5v5h-5zM456 325h5v5h-5zM457 325h5v5h-5zM458 325h5v5h-5zM459 325h5v5h-5zM460 325h5v5h-5zM461 325h5v5h-5zM462 324h5v5h-5zM463 325h5v5h-5zM464 324h5v5h-5zM465 324h5v5h-5zM466 324h5v5h-5zM467 324h5v5h-5zM468 324h5v5h-5zM469 324h5v5h-5zM470 324h5v5h-5zM471 324h5v5h-5zM472 324h5v5h-5zM473 324h5v5h-5zM474 324h5v5h-5zM475 324h5v5h-5zM476 324h5v5h-5zM477 323h5v5h-5zM478 323h5v5h-5zM479 323h5v5h-5zM480 323h5v5h-5zM481 323h5v5h-5zM482 323h5v5h-5zM483 323h5v5h-5zM484 323h5v5h-5zM485 323h5v5h-5zM486 323h5v5h-5zM487 322h5v5h-5zM488 322h5v5h-5zM489 322h5v5h-5zM490 322h5v5h-5zM491 322h5v5h-5zM492 322h5v5h-5zM493 322h5v5h-5zM494 321h5v5h-5zM495 321h5v5h-5zM496 321h5v5h-5zM497 321h5v5h-5zM498 321h5v5h-5zM499 321h5v5h-5zM500 321h5v5h-5zM501 321h5v5h-5zM502 320h5v5h-5zM503 320h5v5h-5zM504 320h5v5h-5zM505 320h5v5h-5zM506 320h5v5h-5zM507 319h5v5h-5zM508 319h5v5h-5zM509 319h5v5h-5zM510 319h5v5h-5zM511 319h5v5h-5zM512 318h5v5h-5zM513 318h5v5h-5zM514 318h5v5h-5zM515 318h5v5h-5zM516 318h5v5h-5zM517 318h5v5h-5zM518 317h5v5h-5zM519 317h5v5h-5zM520 317h5v5h-5zM521 317h5v5h-5zM522 317h5v5h-5zM523 316h5v5h-5zM524 316h5v5h-5zM525 316h5v5h-5zM526 315h5v5h-5zM527 315h5v5h-5zM528 315h5v5h-5zM529 315h5v5h-5zM530 315h5v5h-5zM531 315h5v5h-5zM532 314h5v5h-5zM533 314h5v5h-5zM534 314h5v5h-5zM535 313h5v5h-5zM536 313h5v5h-5zM537 313h5v5h-5zM538 312h5v5h-5zM539 312h5v5h-5zM540 312h5v5h-5zM541 312h5v5h-5zM542 311h5v5h-5zM543 311h5v5h-5zM544 311h5v5h-5zM545 311h5v5h-5zM546 311h5v5h-5zM547 310h5v5h-5zM548 310h5v5h-5zM549 310h5v5h-5zM550 309h5v5h-5zM551 309h5v5h-5zM552 308h5v5h-5zM553 308h5v5h-5zM554 308h5v5h-5zM555 308h5v5h-5zM556 308h5v5h-5zM557 307h5v5h-5zM558 307h5v5h-5zM559 307h5v5h-5zM560 306h5v5h-5zM561 305h5v5h-5zM562 305h5v5h-5zM563 305h5v5h-5zM564 305h5v5h-5zM565 304h5v5h-5zM566 304h5v5h-5zM567 304h5v5h-5zM568 304h5v5h-5zM569 303h5v5h-5zM570 303h5v5h-5zM571 303h5v5h-5zM572 302h5v5h-5zM573 301h5v5h-5zM574 301h5v5h-5zM575 301h5v5h-5zM576 300h5v5h-5zM577 300h5v5h-5zM578 300h5v5h-5zM579 299h5v5h-5zM580 299h5v5h-5zM581 299h5v5h-5zM582 298h5v5h-5zM583 298h5v5h-5zM584 297h5v5h-5zM585 297h5v5h-5zM586 297h5v5h-5zM587 296h5v5h-5zM588 296h5v5h-5zM589 295h5v5h-5zM590 295h5v5h-5zM591 294h5v5h-5zM592 294h5v5h-5zM593 293h5v5h-5zM594 294h5v5h-5zM595 293h5v5h-5zM596 292h5v5h-5zM597 292h5v5h-5zM598 292h5v5h-5zM599 292h5v5h-5zM600 291h5v5h-5zM601 290h5v5h-5zM602 290h5v5h-5zM603 289h5v5h-5zM604 289h5v5h-5zM605 289h5v5h-5zM606 288h5v5h-5zM607 287h5v5h-5zM608 287h5v5h-5zM609 286h5v5h-5zM610 286h5v5h-5zM611 286h5v5h-5zM612 286h5v5h-5zM613 285h5v5h-5zM614 285h5v5h-5zM615 284h5v5h-5zM616 283h5v5h-5zM617 283h5v5h-5zM618 282h5v5h-5zM619 282h5v5h-5zM620 281h5v5h-5zM621 281h5v5h-5zM622 281h5v5h-5zM623 280h5v5h-5zM624 280h5v5h-5zM625 279h5v5h-5zM626 278h5v5h-5zM627 278h5v5h-5zM628 277h5v5h-5zM629 277h5v5h-5zM630 276h5v5h-5zM631 275h5v5h-5zM632 275h5v5h-5zM633 275h5v5h-5zM634 274h5v5h-5zM635 274h5v5h-5zM636 273h5v5h-5zM637 272h5v5h-5zM638 272h5v5h-5zM639 271h5v5h-5zM640 271h5v5h-5zM641 270h5v5h-5zM642 270h5v5h-5zM643 270h5v5h-5zM644 269h5v5h-5zM645 268h5v5h-5zM646 267h5v5h-5zM647 267h5v5h-5zM648 266h5v5h-5zM649 266h5v5h-5zM650 265h5v5h-5zM651 264h5v5h-5zM652 264h5v5h-5zM653 264h5v5h-5zM654 263h5v5h-5zM655 262h5v5h-5zM656 261h5v5h-5zM657 262h5v5h-5zM658 260h5v5h-5zM659 260h5v5h-5zM660 260h5v5h-5zM661 259h5v5h-5zM662 259h5v5h-5zM663 257h5v5h-5zM664 257h5v5h-5zM665 256h5v5h-5zM666 256h5v5h-5zM667 255h5v5h-5zM668 254h5v5h-5zM669 254h5v5h-5zM670 254h5v5h-5zM671 252h5v5h-5zM672 252h5v5h-5zM673 251h5v5h-5zM674 251h5v5h-5zM675 250h5v5h-5zM676 249h5v5h-5zM677 249h5v5h-5zM678 249h5v5h-5zM679 248h5v5h-5zM680 247h5v5h-5zM681 246h5v5h-5zM682 245h5v5h-5zM683 244h5v5h-5zM684 243h5v5h-5zM685 243h5v5h-5zM686 242h5v5h-5zM687 242h5v5h-5zM688 242h5v5h-5zM689 241h5v5h-5zM690 240h5v5h-5zM691 239h5v5h-5zM692 238h5v5h-5zM693 238h5v5h-5zM694 236h5v5h-5zM695 236h5v5h-5zM696 236h5v5h-5zM697 235h5v5h-5zM698 235h5v5h-5zM699 234h5v5h-5zM700 233h5v5h-5zM701 232h5v5h-5zM702 231h5v5h-5zM703 231h5v5h-5zM704 230h5v5h-5zM705 229h5v5h-5zM706 229h5v5h-5zM707 227h5v5h-5zM708 228h5v5h-5zM709 227h5v5h-5zM710 226h5v5h-5zM711 225h5v5h-5zM712 224h5v5h-5zM713 223h5v5h-5zM714 223h5v5h-5zM715 221h5v5h-5zM716 221h5v5h-5zM717 220h5v5h-5zM718 219h5v5h-5zM719 218h5v5h-5zM720 218h5v5h-5zM721 217h5v5h-5zM722 216h5v5h-5zM723 215h5v5h-5zM724 215h5v5h-5zM725 214h5v5h-5zM726 213h5v5h-5zM727 212h5v5h-5zM728 212h5v5h-5zM729 210h5v5h-5zM730 210h5v5h-5zM731 210h5v5h-5zM732 208h5v5h-5zM733 208h5v5h-5zM734 207h5v5h-5zM735 205h5v5h-5zM736 204h5v5h-5zM737 205h5v5h-5zM738 203h5v5h-5zM739 203h5v5h-5zM740 202h5v5h-5zM741 201h5v5h-5zM742 200h5v5h-5zM743 199h5v5h-5zM744 199h5v5h-5zM745 198h5v5h-5zM746 196h5v5h-5zM747 196h5v5h-5zM748 195h5v5h-5zM749 194h5v5h-5zM750 193h5v5h-5zM751 193h5v5h-5zM752 192h5v5h-5zM753 191h5v5h-5zM754 190h5v5h-5zM755 189h5v5h-5zM756 188h5v5h-5zM757 187h5v5h-5zM758 186h5v5h-5zM759 186h5v5h-5zM760 184h5v5h-5zM761 184h5v5h-5zM762 182h5v5h-5zM763 181h5v5h-5zM764 181h5v5h-5zM765 180h5v5h-5zM766 180h5v5h-5zM767 179h5v5h-5zM768 178h5v5h-5zM769 176h5v5h-5zM770 175h5v5h-5zM771 175h5v5h-5zM772 174h5v5h-5zM773 172h5v5h-5zM774 172h5v5h-5zM775 170h5v5h-5zM776 170h5v5h-5zM777 169h5v5h-5zM778 169h5v5h-5zM779 168h5v5h-5zM780 166h5v5h-5zM781 165h5v5h-5zM782 164h5v5h-5zM783 163h5v5h-5zM784 162h5v5h-5zM785 161h5v5h-5zM786 160h5v5h-5zM787 159h5v5h-5zM788 159h5v5h-5zM789 158h5v5h-5zM790 156h5v5h-5zM791 156h5v5h-5zM792 155h5v5h-5zM793 153h5v5h-5zM794 153h5v5h-5zM795 152h5v5h-5zM796 151h5v5h-5zM797 150h5v5h-5zM798 149h5v5h-5zM799 147h5v5h-5zM800 146h5v5h-5zM801 146h5v5h-5zM802 144h5v5h-5zM803 144h5v5h-5zM804 143h5v5h-5zM805 142h5v5h-5zM806 141h5v5h-5zM807 140h5v5h-5zM808 138h5v5h-5zM809 138h5v5h-5zM810 137h5v5h-5zM811 135h5v5h-5zM812 134h5v5h-5zM813 133h5v5h-5zM814 133h5v5h-5zM815 131h5v5h-5zM816 131h5v5h-5zM817 129h5v5h-5zM818 128h5v5h-5zM819 127h5v5h-5zM820 126h5v5h-5zM821 125h5v5h-5zM822 124h5v5h-5zM823 124h5v5h-5zM824 122h5v5h-5z"/>
<path fill="#FF0000" d="M64 474h6v6h-6zM63 477h6v6h-6zM63 520h6v6h-6zM68 474h6v6h-6zM68 456h6v6h-6zM67 450h6v6h-6zM67 520h6v6h-6zM70 445h6v6h-6zM70 455h6v6h-6zM71 476h6v6h-6zM70 519h6v6h-6zM74 447h6v6h-6zM74 480h6v6h-6zM75 467h6v6h-6zM75 518h6v6h-6zM77 474h6v6h-6zM79 463h6v6h-6zM78 478h6v6h-6zM78 514h6v6h-6zM78 516h6v6h-6zM81 452h6v6h-6zM81 479h6v6h-6zM82 459h6v6h-6zM81 520h6v6h-6zM83 514h6v6h-6zM86 472h6v6h-6zM86 471h6v6h-6zM86 442h6v6h-6zM86 440h6v6h-6zM86 523h6v6h-6zM90 468h6v6h-6zM89 475h6v6h-6zM90 435h6v6h-6zM90 478h6v6h-6zM89 515h6v6h-6zM93 477h6v6h-6zM93 462h6v6h-6zM94 465h6v6h-6zM94 455h6v6h-6zM94 516h6v6h-6zM93 513h6v6h-6zM96 436h6v6h-6zM97 446h6v6h-6zM97 437h6v6h-6zM97 523h6v6h-6zM100 472h6v6h-6zM102 439h6v6h-6zM101 442h6v6h-6zM100 513h6v6h-6zM105 464h6v6h-6zM105 465h6v6h-6zM105 452h6v6h-6zM106 522h6v6h-6zM104 513h6v6h-6zM109 444h6v6h-6zM108 466h6v6h-6zM108 455h6v6h-6zM109 520h6v6h-6zM108 512h6v6h-6zM112 475h6v6h-6zM112 473h6v6h-6zM112 457h6v6h-6zM112 514h6v6h-6zM116 451h6v6h-6zM117 474h6v6h-6zM116 471h6v6h-6zM116 514h6v6h-6zM121 467h6v6h-6zM120 456h6v6h-6zM121 461h6v6h-6zM121 514h6v6h-6zM123 467h6v6h-6zM125 446h6v6h-6zM125 519h6v6h-6zM128 444h6v6h-6zM127 453h6v6h-6zM128 457h6v6h-6zM128 522h6v6h-6zM131 471h6v6h-6zM131 464h6v6h-6zM131 452h6v6h-6zM131 514h6v6h-6zM132 516h6v6h-6zM136 449h6v6h-6zM135 472h6v6h-6zM135 462h6v6h-6zM136 520h6v6h-6zM138 466h6v6h-6zM140 461h6v6h-6zM140 448h6v6h-6zM139 521h6v6h-6zM143 468h6v6h-6zM143 450h6v6h-6zM143 515h6v6h-6zM147 446h6v6h-6zM147 470h6v6h-6zM147 522h6v6h-6zM150 465h6v6h-6zM151 467h6v6h-6zM151 467h6v6h-6zM151 520h6v6h-6zM154 467h6v6h-6zM155 466h6v6h-6zM155 518h6v6h-6zM158 450h6v6h-6zM158 457h6v6h-6zM158 513h6v6h-6zM162 463h6v6h-6zM163 454h6v6h-6zM162 522h6v6h-6zM165 454h6v6h-6zM166 448h6v6h-6zM166 512h6v6h-6zM169 459h6v6h-6zM169 470h6v6h-6zM169 516h6v6h-6zM174 459h6v6h-6zM174 462h6v6h-6zM172 520h6v6h-6zM173 512h6v6h-6zM178 448h6v6h-6zM176 459h6v6h-6zM177 514h6v6h-6zM176 512h6v6h-6zM182 463h6v6h-6zM180 523h6v6h-6zM185 469h6v6h-6zM185 463h6v6h-6zM185 520h6v6h-6zM185 513h6v6h-6zM188 451h6v6h-6zM188 455h6v6h-6zM188 523h6v6h-6zM189 509h6v6h-6zM191 466h6v6h-6zM192 455h6v6h-6zM192 513h6v6h-6zM191 524h6v6h-6zM197 462h6v6h-6zM196 459h6v6h-6zM196 517h6v6h-6zM197 509h6v6h-6zM199 465h6v6h-6zM200 467h6v6h-6zM200 516h6v6h-6zM200 509h6v6h-6zM199 514h6v6h-6zM204 453h6v6h-6zM204 460h6v6h-6zM204 522h6v6h-6zM203 516h6v6h-6zM207 461h6v6h-6zM208 511h6v6h-6zM207 510h6v6h-6zM212 464h6v6h-6zM211 457h6v6h-6zM211 513h6v6h-6zM211 519h6v6h-6zM215 456h6v6h-6zM216 456h6v6h-6zM216 524h6v6h-6zM214 513h6v6h-6zM215 512h6v6h-6zM219 457h6v6h-6zM220 467h6v6h-6zM219 508h6v6h-6zM219 508h6v6h-6zM218 508h6v6h-6zM222 459h6v6h-6zM223 461h6v6h-6zM222 505h6v6h-6zM223 505h6v6h-6zM223 509h6v6h-6zM226 463h6v6h-6zM227 459h6v6h-6zM227 505h6v6h-6zM226 521h6v6h-6zM231 458h6v6h-6zM230 459h6v6h-6zM231 507h6v6h-6zM231 511h6v6h-6zM235 462h6v6h-6zM234 511h6v6h-6zM234 504h6v6h-6zM238 465h6v6h-6zM237 469h6v6h-6zM237 505h6v6h-6zM238 505h6v6h-6zM238 523h6v6h-6zM241 468h6v6h-6zM241 468h6v6h-6zM241 516h6v6h-6zM241 513h6v6h-6zM241 517h6v6h-6zM245 472h6v6h-6zM246 472h6v6h-6zM245 512h6v6h-6zM244 503h6v6h-6zM245 510h6v6h-6zM249 463h6v6h-6zM250 466h6v6h-6zM249 508h6v6h-6zM249 506h6v6h-6zM249 508h6v6h-6zM252 468h6v6h-6zM252 471h6v6h-6zM253 503h6v6h-6zM253 513h6v6h-6zM254 507h6v6h-6zM257 467h6v6h-6zM257 514h6v6h-6zM256 510h6v6h-6zM258 503h6v6h-6zM260 470h6v6h-6zM261 518h6v6h-6zM261 501h6v6h-6zM260 503h6v6h-6zM265 467h6v6h-6zM263 471h6v6h-6zM265 506h6v6h-6zM265 503h6v6h-6zM265 519h6v6h-6zM268 470h6v6h-6zM269 465h6v6h-6zM267 509h6v6h-6zM267 500h6v6h-6zM268 506h6v6h-6zM272 468h6v6h-6zM273 471h6v6h-6zM272 504h6v6h-6zM272 523h6v6h-6zM271 513h6v6h-6zM276 466h6v6h-6zM277 508h6v6h-6zM277 512h6v6h-6zM275 511h6v6h-6zM275 512h6v6h-6zM280 468h6v6h-6zM280 499h6v6h-6zM279 514h6v6h-6zM279 502h6v6h-6zM279 499h6v6h-6zM283 467h6v6h-6zM284 466h6v6h-6zM284 508h6v6h-6zM283 504h6v6h-6zM284 498h6v6h-6zM286 470h6v6h-6zM287 470h6v6h-6zM286 506h6v6h-6zM288 513h6v6h-6zM286 518h6v6h-6zM287 502h6v6h-6zM292 467h6v6h-6zM290 468h6v6h-6zM291 501h6v6h-6zM290 502h6v6h-6zM291 501h6v6h-6zM292 499h6v6h-6zM295 466h6v6h-6zM294 468h6v6h-6zM294 521h6v6h-6zM295 498h6v6h-6zM295 504h6v6h-6zM299 469h6v6h-6zM298 468h6v6h-6zM298 500h6v6h-6zM298 499h6v6h-6zM298 499h6v6h-6zM303 468h6v6h-6zM302 467h6v6h-6zM303 509h6v6h-6zM303 521h6v6h-6zM303 500h6v6h-6zM302 505h6v6h-6zM306 467h6v6h-6zM306 469h6v6h-6zM307 498h6v6h-6zM305 508h6v6h-6zM307 518h6v6h-6zM305 508h6v6h-6zM310 469h6v6h-6zM311 468h6v6h-6zM310 518h6v6h-6zM310 524h6v6h-6zM310 497h6v6h-6zM310 514h6v6h-6zM314 467h6v6h-6zM315 468h6v6h-6zM314 510h6v6h-6zM315 499h6v6h-6zM313 513h6v6h-6zM314 510h6v6h-6zM317 469h6v6h-6zM317 501h6v6h-6zM317 515h6v6h-6zM318 505h6v6h-6zM318 503h6v6h-6zM320 469h6v6h-6zM322 468h6v6h-6zM321 511h6v6h-6zM322 515h6v6h-6zM321 499h6v6h-6zM325 470h6v6h-6zM324 511h6v6h-6zM325 511h6v6h-6zM326 499h6v6h-6zM326 510h6v6h-6zM328 469h6v6h-6zM328 470h6v6h-6zM328 501h6v6h-6zM328 507h6v6h-6zM328 503h6v6h-6zM329 503h6v6h-6zM334 471h6v6h-6zM332 471h6v6h-6zM333 503h6v6h-6zM333 519h6v6h-6zM333 501h6v6h-6zM333 514h6v6h-6zM337 471h6v6h-6zM336 471h6v6h-6zM336 502h6v6h-6zM336 508h6v6h-6zM338 505h6v6h-6zM341 472h6v6h-6zM341 472h6v6h-6zM340 511h6v6h-6zM341 503h6v6h-6zM340 506h6v6h-6zM343 472h6v6h-6zM344 471h6v6h-6zM344 516h6v6h-6zM345 523h6v6h-6zM343 499h6v6h-6zM344 499h6v6h-6zM348 471h6v6h-6zM348 472h6v6h-6zM348 514h6v6h-6zM347 507h6v6h-6zM348 504h6v6h-6zM348 521h6v6h-6zM352 472h6v6h-6zM351 501h6v6h-6zM352 506h6v6h-6zM352 518h6v6h-6zM351 501h6v6h-6zM355 472h6v6h-6zM356 472h6v6h-6zM356 518h6v6h-6zM355 500h6v6h-6zM356 515h6v6h-6zM359 472h6v6h-6zM359 472h6v6h-6zM360 506h6v6h-6zM359 507h6v6h-6zM359 506h6v6h-6zM360 502h6v6h-6zM364 473h6v6h-6zM363 512h6v6h-6zM363 512h6v6h-6zM363 515h6v6h-6zM367 473h6v6h-6zM368 473h6v6h-6zM368 500h6v6h-6zM368 523h6v6h-6zM367 512h6v6h-6zM367 499h6v6h-6zM371 473h6v6h-6zM370 473h6v6h-6zM371 509h6v6h-6zM370 511h6v6h-6zM370 516h6v6h-6zM374 474h6v6h-6zM376 474h6v6h-6zM374 506h6v6h-6zM375 524h6v6h-6zM374 519h6v6h-6zM378 474h6v6h-6zM378 474h6v6h-6zM378 520h6v6h-6zM378 507h6v6h-6zM379 518h6v6h-6zM378 500h6v6h-6zM382 474h6v6h-6zM383 474h6v6h-6zM382 516h6v6h-6zM382 512h6v6h-6zM383 498h6v6h-6zM385 474h6v6h-6zM387 474h6v6h-6zM385 510h6v6h-6zM387 500h6v6h-6zM386 511h6v6h-6zM386 503h6v6h-6zM390 474h6v6h-6zM390 474h6v6h-6zM389 499h6v6h-6zM390 523h6v6h-6zM390 509h6v6h-6zM389 507h6v6h-6zM394 474h6v6h-6zM393 474h6v6h-6zM393 498h6v6h-6zM394 503h6v6h-6zM394 509h6v6h-6zM394 521h6v6h-6zM397 474h6v6h-6zM398 474h6v6h-6zM398 511h6v6h-6zM397 508h6v6h-6zM398 497h6v6h-6zM400 473h6v6h-6zM402 473h6v6h-6zM402 512h6v6h-6zM401 498h6v6h-6zM401 506h6v6h-6zM400 497h6v6h-6zM405 473h6v6h-6zM405 473h6v6h-6zM405 516h6v6h-6zM406 497h6v6h-6zM405 508h6v6h-6zM404 509h6v6h-6zM408 473h6v6h-6zM409 473h6v6h-6zM408 515h6v6h-6zM408 516h6v6h-6zM408 518h6v6h-6zM408 505h6v6h-6zM413 473h6v6h-6zM413 473h6v6h-6zM413 511h6v6h-6zM412 503h6v6h-6zM412 499h6v6h-6zM412 502h6v6h-6zM416 473h6v6h-6zM417 473h6v6h-6zM416 510h6v6h-6zM417 502h6v6h-6zM417 506h6v6h-6zM419 473h6v6h-6zM421 473h6v6h-6zM419 503h6v6h-6zM420 504h6v6h-6zM421 501h6v6h-6zM421 517h6v6h-6zM423 499h6v6h-6zM425 506h6v6h-6zM423 498h6v6h-6zM424 513h6v6h-6zM428 504h6v6h-6zM428 520h6v6h-6zM428 517h6v6h-6zM427 502h6v6h-6zM431 519h6v6h-6zM432 507h6v6h-6zM431 515h6v6h-6zM432 512h6v6h-6zM436 506h6v6h-6zM435 509h6v6h-6zM435 504h6v6h-6zM435 516h6v6h-6zM439 502h6v6h-6zM440 502h6v6h-6zM439 499h6v6h-6zM440 516h6v6h-6zM444 500h6v6h-6zM444 511h6v6h-6zM442 509h6v6h-6zM443 507h6v6h-6zM446 497h6v6h-6zM446 509h6v6h-6zM448 499h6v6h-6zM447 510h6v6h-6zM450 501h6v6h-6zM451 511h6v6h-6zM451 507h6v6h-6zM454 513h6v6h-6zM455 524h6v6h-6zM455 524h6v6h-6zM458 510h6v6h-6zM457 510h6v6h-6zM459 518h6v6h-6zM458 512h6v6h-6zM462 498h6v6h-6zM461 509h6v6h-6zM463 504h6v6h-6zM466 472h6v6h-6zM465 472h6v6h-6zM466 515h6v6h-6zM465 521h6v6h-6zM467 511h6v6h-6zM470 472h6v6h-6zM470 472h6v6h-6zM469 515h6v6h-6zM469 503h6v6h-6zM469 509h6v6h-6zM474 472h6v6h-6zM473 473h6v6h-6zM473 509h6v6h-6zM474 510h6v6h-6zM473 522h6v6h-6zM474 513h6v6h-6zM476 473h6v6h-6zM476 473h6v6h-6zM477 505h6v6h-6zM478 503h6v6h-6zM478 517h6v6h-6zM482 473h6v6h-6zM481 473h6v6h-6zM481 515h6v6h-6zM481 504h6v6h-6zM481 500h6v6h-6zM485 473h6v6h-6zM484 473h6v6h-6zM485 501h6v6h-6zM486 501h6v6h-6zM485 513h6v6h-6zM489 473h6v6h-6zM489 525h6v6h-6zM489 509h6v6h-6zM489 514h6v6h-6zM492 473h6v6h-6zM492 473h6v6h-6zM493 512h6v6h-6zM493 502h6v6h-6zM493 501h6v6h-6zM496 474h6v6h-6zM496 474h6v6h-6zM495 519h6v6h-6zM497 502h6v6h-6zM496 506h6v6h-6zM501 474h6v6h-6zM499 525h6v6h-6zM499 503h6v6h-6zM500 518h6v6h-6zM505 474h6v6h-6zM505 474h6v6h-6zM504 504h6v6h-6zM504 509h6v6h-6zM503 504h6v6h-6zM507 474h6v6h-6zM507 474h6v6h-6zM507 516h6v6h-6zM508 522h6v6h-6zM512 474h6v6h-6zM512 514h6v6h-6zM512 503h6v6h-6zM512 512h6v6h-6zM516 473h6v6h-6zM516 473h6v6h-6zM515 503h6v6h-6zM516 505h6v6h-6zM516 502h6v6h-6zM519 473h6v6h-6zM519 473h6v6h-6zM518 519h6v6h-6zM520 510h6v6h-6zM520 502h6v6h-6zM522 473h6v6h-6zM523 473h6v6h-6zM522 517h6v6h-6zM523 503h6v6h-6zM523 506h6v6h-6zM526 473h6v6h-6zM526 473h6v6h-6zM526 502h6v6h-6zM527 502h6v6h-6zM526 511h6v6h-6zM531 472h6v6h-6zM530 500h6v6h-6zM529 513h6v6h-6zM531 519h6v6h-6zM535 472h6v6h-6zM534 472h6v6h-6zM533 509h6v6h-6zM535 519h6v6h-6zM534 518h6v6h-6zM538 472h6v6h-6zM538 472h6v6h-6zM538 507h6v6h-6zM539 511h6v6h-6zM538 500h6v6h-6zM538 503h6v6h-6zM541 471h6v6h-6zM541 472h6v6h-6zM542 516h6v6h-6zM542 515h6v6h-6zM543 500h6v6h-6zM546 472h6v6h-6zM545 501h6v6h-6zM546 509h6v6h-6zM547 504h6v6h-6zM550 472h6v6h-6zM549 471h6v6h-6zM549 517h6v6h-6zM550 521h6v6h-6zM550 501h6v6h-6zM550 508h6v6h-6zM553 471h6v6h-6zM553 504h6v6h-6zM553 504h6v6h-6zM553 505h6v6h-6zM557 472h6v6h-6zM557 471h6v6h-6zM556 507h6v6h-6zM558 514h6v6h-6zM557 496h6v6h-6zM558 519h6v6h-6zM561 470h6v6h-6zM560 508h6v6h-6zM562 497h6v6h-6zM561 497h6v6h-6zM561 507h6v6h-6zM564 471h6v6h-6zM565 471h6v6h-6zM565 514h6v6h-6zM564 500h6v6h-6zM565 499h6v6h-6zM564 501h6v6h-6zM568 470h6v6h-6zM569 469h6v6h-6zM569 498h6v6h-6zM568 505h6v6h-6zM569 509h6v6h-6zM572 469h6v6h-6zM571 471h6v6h-6zM572 501h6v6h-6zM573 503h6v6h-6zM572 510h6v6h-6zM572 519h6v6h-6zM576 472h6v6h-6zM575 499h6v6h-6zM576 521h6v6h-6zM576 519h6v6h-6zM575 506h6v6h-6zM580 470h6v6h-6zM579 502h6v6h-6zM580 512h6v6h-6zM579 500h6v6h-6zM580 498h6v6h-6zM585 471h6v6h-6zM584 470h6v6h-6zM584 498h6v6h-6zM584 517h6v6h-6zM584 505h6v6h-6zM584 507h6v6h-6zM588 471h6v6h-6zM587 469h6v6h-6zM587 497h6v6h-6zM588 499h6v6h-6zM587 500h6v6h-6zM587 498h6v6h-6zM592 467h6v6h-6zM591 498h6v6h-6zM592 509h6v6h-6zM592 506h6v6h-6zM591 522h6v6h-6zM596 468h6v6h-6zM595 498h6v6h-6zM595 517h6v6h-6zM596 502h6v6h-6zM596 514h6v6h-6zM598 469h6v6h-6zM599 467h6v6h-6zM600 498h6v6h-6zM600 505h6v6h-6zM598 499h6v6h-6zM600 519h6v6h-6zM602 470h6v6h-6zM602 499h6v6h-6zM602 498h6v6h-6zM602 502h6v6h-6zM603 499h6v6h-6zM606 468h6v6h-6zM607 470h6v6h-6zM607 522h6v6h-6zM607 503h6v6h-6zM607 515h6v6h-6zM607 499h6v6h-6zM610 471h6v6h-6zM611 499h6v6h-6zM611 500h6v6h-6zM609 505h6v6h-6zM610 505h6v6h-6zM613 470h6v6h-6zM614 466h6v6h-6zM613 497h6v6h-6zM615 498h6v6h-6zM615 501h6v6h-6zM618 467h6v6h-6zM618 466h6v6h-6zM618 501h6v6h-6zM618 516h6v6h-6zM618 500h6v6h-6zM619 523h6v6h-6zM621 471h6v6h-6zM622 470h6v6h-6zM622 511h6v6h-6zM622 501h6v6h-6zM621 514h6v6h-6zM626 470h6v6h-6zM625 509h6v6h-6zM626 502h6v6h-6zM625 501h6v6h-6zM629 469h6v6h-6zM629 466h6v6h-6zM629 513h6v6h-6zM630 518h6v6h-6zM630 524h6v6h-6zM632 471h6v6h-6zM633 466h6v6h-6zM633 517h6v6h-6zM634 508h6v6h-6zM637 472h6v6h-6zM636 469h6v6h-6zM637 513h6v6h-6zM638 525h6v6h-6zM641 471h6v6h-6zM640 466h6v6h-6zM640 512h6v6h-6zM640 508h6v6h-6zM641 517h6v6h-6zM645 470h6v6h-6zM644 467h6v6h-6zM644 510h6v6h-6zM645 508h6v6h-6zM645 511h6v6h-6zM648 466h6v6h-6zM648 471h6v6h-6zM648 519h6v6h-6zM647 512h6v6h-6zM653 466h6v6h-6zM652 465h6v6h-6zM652 511h6v6h-6zM652 511h6v6h-6zM655 469h6v6h-6zM655 513h6v6h-6zM655 519h6v6h-6zM659 462h6v6h-6zM659 510h6v6h-6zM660 515h6v6h-6zM664 471h6v6h-6zM663 462h6v6h-6zM664 517h6v6h-6zM663 522h6v6h-6zM666 461h6v6h-6zM667 468h6v6h-6zM668 525h6v6h-6zM668 518h6v6h-6zM670 468h6v6h-6zM671 462h6v6h-6zM671 516h6v6h-6zM672 513h6v6h-6zM672 510h6v6h-6zM676 465h6v6h-6zM675 459h6v6h-6zM675 513h6v6h-6zM676 511h6v6h-6zM679 462h6v6h-6zM678 459h6v6h-6zM678 515h6v6h-6zM678 507h6v6h-6zM678 520h6v6h-6zM681 469h6v6h-6zM682 459h6v6h-6zM682 506h6v6h-6zM683 513h6v6h-6zM682 515h6v6h-6zM686 466h6v6h-6zM686 468h6v6h-6zM687 503h6v6h-6zM687 509h6v6h-6zM685 522h6v6h-6zM689 464h6v6h-6zM689 454h6v6h-6zM691 519h6v6h-6zM689 502h6v6h-6zM691 522h6v6h-6zM694 460h6v6h-6zM693 457h6v6h-6zM695 515h6v6h-6zM694 502h6v6h-6zM694 507h6v6h-6zM698 454h6v6h-6zM697 456h6v6h-6zM697 503h6v6h-6zM698 501h6v6h-6zM698 518h6v6h-6zM698 514h6v6h-6zM702 469h6v6h-6zM702 453h6v6h-6zM701 516h6v6h-6zM701 510h6v6h-6zM702 514h6v6h-6zM701 511h6v6h-6zM705 451h6v6h-6zM705 514h6v6h-6zM705 509h6v6h-6zM705 510h6v6h-6zM710 451h6v6h-6zM708 464h6v6h-6zM708 512h6v6h-6zM709 517h6v6h-6zM710 504h6v6h-6zM712 458h6v6h-6zM714 464h6v6h-6zM713 514h6v6h-6zM713 505h6v6h-6zM712 509h6v6h-6zM717 453h6v6h-6zM718 467h6v6h-6zM716 518h6v6h-6zM716 511h6v6h-6zM717 515h6v6h-6zM720 467h6v6h-6zM721 463h6v6h-6zM720 509h6v6h-6zM721 512h6v6h-6zM720 510h6v6h-6zM724 464h6v6h-6zM725 449h6v6h-6zM725 514h6v6h-6zM725 517h6v6h-6zM725 515h6v6h-6zM727 458h6v6h-6zM728 448h6v6h-6zM728 515h6v6h-6zM728 514h6v6h-6zM731 460h6v6h-6zM732 458h6v6h-6zM732 512h6v6h-6zM733 508h6v6h-6zM733 518h6v6h-6zM736 471h6v6h-6zM736 446h6v6h-6zM735 508h6v6h-6zM735 505h6v6h-6zM739 454h6v6h-6zM739 457h6v6h-6zM739 521h6v6h-6zM740 509h6v6h-6zM744 464h6v6h-6zM743 465h6v6h-6zM744 472h6v6h-6zM743 510h6v6h-6zM744 517h6v6h-6zM746 458h6v6h-6zM746 464h6v6h-6zM748 445h6v6h-6zM746 522h6v6h-6zM747 520h6v6h-6zM747 506h6v6h-6zM752 451h6v6h-6zM750 465h6v6h-6zM751 456h6v6h-6zM750 506h6v6h-6zM752 513h6v6h-6zM755 463h6v6h-6zM755 454h6v6h-6zM754 438h6v6h-6zM754 510h6v6h-6zM755 520h6v6h-6zM759 466h6v6h-6zM759 438h6v6h-6zM759 456h6v6h-6zM758 510h6v6h-6zM758 509h6v6h-6zM763 450h6v6h-6zM762 459h6v6h-6zM763 445h6v6h-6zM762 509h6v6h-6zM762 523h6v6h-6zM767 447h6v6h-6zM767 468h6v6h-6zM765 464h6v6h-6zM765 513h6v6h-6zM765 509h6v6h-6zM766 520h6v6h-6zM770 473h6v6h-6zM770 449h6v6h-6zM769 467h6v6h-6zM770 469h6v6h-6zM770 507h6v6h-6zM770 517h6v6h-6zM773 460h6v6h-6zM775 470h6v6h-6zM774 467h6v6h-6zM774 517h6v6h-6zM773 508h6v6h-6zM773 517h6v6h-6zM778 473h6v6h-6zM778 465h6v6h-6zM778 430h6v6h-6zM777 438h6v6h-6zM777 514h6v6h-6zM778 509h6v6h-6zM781 444h6v6h-6zM781 441h6v6h-6zM781 474h6v6h-6zM781 465h6v6h-6zM781 513h6v6h-6zM781 519h6v6h-6zM786 444h6v6h-6zM785 437h6v6h-6zM785 428h6v6h-6zM785 520h6v6h-6zM785 519h6v6h-6zM789 451h6v6h-6zM788 449h6v6h-6zM789 468h6v6h-6zM789 436h6v6h-6zM789 511h6v6h-6zM789 513h6v6h-6zM793 443h6v6h-6zM793 432h6v6h-6zM793 455h6v6h-6zM792 434h6v6h-6zM793 521h6v6h-6zM793 515h6v6h-6zM797 426h6v6h-6zM796 467h6v6h-6zM797 442h6v6h-6zM797 473h6v6h-6zM797 513h6v6h-6zM800 470h6v6h-6zM801 467h6v6h-6zM801 477h6v6h-6zM800 444h6v6h-6zM800 515h6v6h-6zM804 427h6v6h-6zM804 450h6v6h-6zM803 470h6v6h-6zM804 462h6v6h-6zM803 517h6v6h-6zM808 436h6v6h-6zM807 458h6v6h-6zM808 468h6v6h-6zM809 472h6v6h-6zM808 443h6v6h-6zM812 465h6v6h-6zM811 473h6v6h-6zM812 433h6v6h-6zM812 475h6v6h-6zM811 523h6v6h-6zM815 451h6v6h-6zM816 426h6v6h-6zM816 455h6v6h-6zM815 469h6v6h-6zM815 525h6v6h-6zM818 457h6v6h-6zM818 454h6v6h-6zM818 454h6v6h-6zM819 476h6v6h-6zM824 449h6v6h-6zM824 439h6v6h-6zM822 460h6v6h-6zM824 522h6v6h-6z"/>
<path fill="#00FF40" d="M64 500h6v6h-6zM63 501h6v6h-6zM64 488h6v6h-6zM63 482h6v6h-6zM63 524h6v6h-6zM68 501h6v6h-6zM68 490h6v6h-6zM67 487h6v6h-6zM67 501h6v6h-6zM67 489h6v6h-6zM67 481h6v6h-6zM67 524h6v6h-6zM70 486h6v6h-6zM70 491h6v6h-6zM71 501h6v6h-6zM70 490h6v6h-6zM71 499h6v6h-6zM70 523h6v6h-6zM74 487h6v6h-6zM74 503h6v6h-6zM75 496h6v6h-6zM74 481h6v6h-6zM74 477h6v6h-6zM75 480h6v6h-6zM75 522h6v6h-6zM77 501h6v6h-6zM79 492h6v6h-6zM78 502h6v6h-6zM79 493h6v6h-6zM78 485h6v6h-6zM78 481h6v6h-6zM78 520h6v6h-6zM78 521h6v6h-6zM81 486h6v6h-6zM81 502h6v6h-6zM82 492h6v6h-6zM82 494h6v6h-6zM82 489h6v6h-6zM83 500h6v6h-6zM81 523h6v6h-6zM83 520h6v6h-6zM86 496h6v6h-6zM86 497h6v6h-6zM86 481h6v6h-6zM86 480h6v6h-6zM86 484h6v6h-6zM85 502h6v6h-6zM86 525h6v6h-6zM90 496h6v6h-6zM89 499h6v6h-6zM90 477h6v6h-6zM90 500h6v6h-6zM90 495h6v6h-6zM90 502h6v6h-6zM89 520h6v6h-6zM93 501h6v6h-6zM93 492h6v6h-6zM94 493h6v6h-6zM94 489h6v6h-6zM93 476h6v6h-6zM93 496h6v6h-6zM94 495h6v6h-6zM94 521h6v6h-6zM93 519h6v6h-6zM96 476h6v6h-6zM97 482h6v6h-6zM97 478h6v6h-6zM98 475h6v6h-6zM97 501h6v6h-6zM97 498h6v6h-6zM97 525h6v6h-6zM100 498h6v6h-6zM102 478h6v6h-6zM101 480h6v6h-6zM101 499h6v6h-6zM102 478h6v6h-6zM100 519h6v6h-6zM105 491h6v6h-6zM105 493h6v6h-6zM105 486h6v6h-6zM106 479h6v6h-6zM104 493h6v6h-6zM106 524h6v6h-6zM104 519h6v6h-6zM109 480h6v6h-6zM108 494h6v6h-6zM108 486h6v6h-6zM108 484h6v6h-6zM109 476h6v6h-6zM109 491h6v6h-6zM109 523h6v6h-6zM108 519h6v6h-6zM112 497h6v6h-6zM112 496h6v6h-6zM112 488h6v6h-6zM113 477h6v6h-6zM113 496h6v6h-6zM113 493h6v6h-6zM112 520h6v6h-6zM116 483h6v6h-6zM117 496h6v6h-6zM116 495h6v6h-6zM117 500h6v6h-6zM117 496h6v6h-6zM116 519h6v6h-6zM121 492h6v6h-6zM120 485h6v6h-6zM121 488h6v6h-6zM120 485h6v6h-6zM121 499h6v6h-6zM121 520h6v6h-6zM123 493h6v6h-6zM125 478h6v6h-6zM123 479h6v6h-6zM124 486h6v6h-6zM125 523h6v6h-6zM128 478h6v6h-6zM127 482h6v6h-6zM128 484h6v6h-6zM128 498h6v6h-6zM127 485h6v6h-6zM128 524h6v6h-6zM131 493h6v6h-6zM131 489h6v6h-6zM131 482h6v6h-6zM131 484h6v6h-6zM132 496h6v6h-6zM131 519h6v6h-6zM132 520h6v6h-6zM136 480h6v6h-6zM135 492h6v6h-6zM135 486h6v6h-6zM135 496h6v6h-6zM136 495h6v6h-6zM136 492h6v6h-6zM136 523h6v6h-6zM138 489h6v6h-6zM140 486h6v6h-6zM140 479h6v6h-6zM140 488h6v6h-6zM140 481h6v6h-6zM140 491h6v6h-6zM139 523h6v6h-6zM143 490h6v6h-6zM143 480h6v6h-6zM142 491h6v6h-6zM142 497h6v6h-6zM143 519h6v6h-6zM147 477h6v6h-6zM147 490h6v6h-6zM147 487h6v6h-6zM146 488h6v6h-6zM147 524h6v6h-6zM150 489h6v6h-6zM151 489h6v6h-6zM151 490h6v6h-6zM150 487h6v6h-6zM150 491h6v6h-6zM151 523h6v6h-6zM154 489h6v6h-6zM155 488h6v6h-6zM153 483h6v6h-6zM155 487h6v6h-6zM155 521h6v6h-6zM158 477h6v6h-6zM158 483h6v6h-6zM158 483h6v6h-6zM158 495h6v6h-6zM158 518h6v6h-6zM162 485h6v6h-6zM163 480h6v6h-6zM162 492h6v6h-6zM162 485h6v6h-6zM162 524h6v6h-6zM165 480h6v6h-6zM166 476h6v6h-6zM165 476h6v6h-6zM166 480h6v6h-6zM166 517h6v6h-6zM169 483h6v6h-6zM169 489h6v6h-6zM169 476h6v6h-6zM169 490h6v6h-6zM169 519h6v6h-6zM174 483h6v6h-6zM174 485h6v6h-6zM173 480h6v6h-6zM173 484h6v6h-6zM172 522h6v6h-6zM173 517h6v6h-6zM178 475h6v6h-6zM176 480h6v6h-6zM176 480h6v6h-6zM178 478h6v6h-6zM177 518h6v6h-6zM176 517h6v6h-6zM182 482h6v6h-6zM181 489h6v6h-6zM180 492h6v6h-6zM180 524h6v6h-6zM185 489h6v6h-6zM185 484h6v6h-6zM186 486h6v6h-6zM184 484h6v6h-6zM185 522h6v6h-6zM185 517h6v6h-6zM188 475h6v6h-6zM188 477h6v6h-6zM188 490h6v6h-6zM188 524h6v6h-6zM189 514h6v6h-6zM191 485h6v6h-6zM192 478h6v6h-6zM193 477h6v6h-6zM193 477h6v6h-6zM192 517h6v6h-6zM191 525h6v6h-6zM197 481h6v6h-6zM196 480h6v6h-6zM197 485h6v6h-6zM196 481h6v6h-6zM196 520h6v6h-6zM197 514h6v6h-6zM199 482h6v6h-6zM200 485h6v6h-6zM199 476h6v6h-6zM199 479h6v6h-6zM200 519h6v6h-6zM200 514h6v6h-6zM199 517h6v6h-6zM204 475h6v6h-6zM204 480h6v6h-6zM204 488h6v6h-6zM204 475h6v6h-6zM204 523h6v6h-6zM203 519h6v6h-6zM207 480h6v6h-6zM206 481h6v6h-6zM207 477h6v6h-6zM208 516h6v6h-6zM207 515h6v6h-6zM212 482h6v6h-6zM211 476h6v6h-6zM211 484h6v6h-6zM212 478h6v6h-6zM211 517h6v6h-6zM211 521h6v6h-6zM215 476h6v6h-6zM216 476h6v6h-6zM216 488h6v6h-6zM214 480h6v6h-6zM216 525h6v6h-6zM214 517h6v6h-6zM215 516h6v6h-6zM219 476h6v6h-6zM220 481h6v6h-6zM218 486h6v6h-6zM219 513h6v6h-6zM219 513h6v6h-6zM218 513h6v6h-6zM222 477h6v6h-6zM223 478h6v6h-6zM222 480h6v6h-6zM223 479h6v6h-6zM222 511h6v6h-6zM223 511h6v6h-6zM223 513h6v6h-6zM226 479h6v6h-6zM227 477h6v6h-6zM226 487h6v6h-6zM227 510h6v6h-6zM226 523h6v6h-6zM231 477h6v6h-6zM230 477h6v6h-6zM230 484h6v6h-6zM231 512h6v6h-6zM231 515h6v6h-6zM235 477h6v6h-6zM235 481h6v6h-6zM234 515h6v6h-6zM234 509h6v6h-6zM238 478h6v6h-6zM237 482h6v6h-6zM238 479h6v6h-6zM237 510h6v6h-6zM238 510h6v6h-6zM238 524h6v6h-6zM241 482h6v6h-6zM241 479h6v6h-6zM242 480h6v6h-6zM241 518h6v6h-6zM241 516h6v6h-6zM241 519h6v6h-6zM245 483h6v6h-6zM246 485h6v6h-6zM245 482h6v6h-6zM245 515h6v6h-6zM244 508h6v6h-6zM245 514h6v6h-6zM249 478h6v6h-6zM250 478h6v6h-6zM248 480h6v6h-6zM249 512h6v6h-6zM249 510h6v6h-6zM249 512h6v6h-6zM252 479h6v6h-6zM252 482h6v6h-6zM252 483h6v6h-6zM253 508h6v6h-6zM253 516h6v6h-6zM254 511h6v6h-6zM257 477h6v6h-6zM256 478h6v6h-6zM257 516h6v6h-6zM256 513h6v6h-6zM258 508h6v6h-6zM260 481h6v6h-6zM261 477h6v6h-6zM261 520h6v6h-6zM261 506h6v6h-6zM260 507h6v6h-6zM265 477h6v6h-6zM263 482h6v6h-6zM264 480h6v6h-6zM265 510h6v6h-6zM265 507h6v6h-6zM265 520h6v6h-6zM268 478h6v6h-6zM269 476h6v6h-6zM268 476h6v6h-6zM267 512h6v6h-6zM267 505h6v6h-6zM268 510h6v6h-6zM272 477h6v6h-6zM273 480h6v6h-6zM273 478h6v6h-6zM272 507h6v6h-6zM272 524h6v6h-6zM271 515h6v6h-6zM276 476h6v6h-6zM275 480h6v6h-6zM277 511h6v6h-6zM277 515h6v6h-6zM275 514h6v6h-6zM275 514h6v6h-6zM280 477h6v6h-6zM280 477h6v6h-6zM280 504h6v6h-6zM279 516h6v6h-6zM279 506h6v6h-6zM279 504h6v6h-6zM283 475h6v6h-6zM284 475h6v6h-6zM284 476h6v6h-6zM284 511h6v6h-6zM283 508h6v6h-6zM284 503h6v6h-6zM286 477h6v6h-6zM287 477h6v6h-6zM287 475h6v6h-6zM286 509h6v6h-6zM288 515h6v6h-6zM286 519h6v6h-6zM287 506h6v6h-6zM292 475h6v6h-6zM290 477h6v6h-6zM291 481h6v6h-6zM291 505h6v6h-6zM290 506h6v6h-6zM291 504h6v6h-6zM292 502h6v6h-6zM295 476h6v6h-6zM294 476h6v6h-6zM296 473h6v6h-6zM294 522h6v6h-6zM295 502h6v6h-6zM295 507h6v6h-6zM299 478h6v6h-6zM298 474h6v6h-6zM300 474h6v6h-6zM298 504h6v6h-6zM298 502h6v6h-6zM298 503h6v6h-6zM303 474h6v6h-6zM302 474h6v6h-6zM303 474h6v6h-6zM303 512h6v6h-6zM303 522h6v6h-6zM303 503h6v6h-6zM302 507h6v6h-6zM306 474h6v6h-6zM306 477h6v6h-6zM306 476h6v6h-6zM307 478h6v6h-6zM307 502h6v6h-6zM305 511h6v6h-6zM307 519h6v6h-6zM305 510h6v6h-6zM310 476h6v6h-6zM311 474h6v6h-6zM311 479h6v6h-6zM310 519h6v6h-6zM310 525h6v6h-6zM310 500h6v6h-6zM310 515h6v6h-6zM314 475h6v6h-6zM315 473h6v6h-6zM314 474h6v6h-6zM314 512h6v6h-6zM315 502h6v6h-6zM313 514h6v6h-6zM314 511h6v6h-6zM317 476h6v6h-6zM317 478h6v6h-6zM317 503h6v6h-6zM317 516h6v6h-6zM318 507h6v6h-6zM318 505h6v6h-6zM320 476h6v6h-6zM322 474h6v6h-6zM322 479h6v6h-6zM321 513h6v6h-6zM322 516h6v6h-6zM321 502h6v6h-6zM325 476h6v6h-6zM326 480h6v6h-6zM324 512h6v6h-6zM325 512h6v6h-6zM326 501h6v6h-6zM326 512h6v6h-6zM328 474h6v6h-6zM328 476h6v6h-6zM329 474h6v6h-6zM328 503h6v6h-6zM328 509h6v6h-6zM328 505h6v6h-6zM329 505h6v6h-6zM334 475h6v6h-6zM332 477h6v6h-6zM333 475h6v6h-6zM333 505h6v6h-6zM333 520h6v6h-6zM333 503h6v6h-6zM333 515h6v6h-6zM337 474h6v6h-6zM336 474h6v6h-6zM337 476h6v6h-6zM336 503h6v6h-6zM336 510h6v6h-6zM338 507h6v6h-6zM341 476h6v6h-6zM341 475h6v6h-6zM340 478h6v6h-6zM340 512h6v6h-6zM341 504h6v6h-6zM340 507h6v6h-6zM343 475h6v6h-6zM344 474h6v6h-6zM344 480h6v6h-6zM344 517h6v6h-6zM345 524h6v6h-6zM343 501h6v6h-6zM344 501h6v6h-6zM348 475h6v6h-6zM348 476h6v6h-6zM348 479h6v6h-6zM348 515h6v6h-6zM347 508h6v6h-6zM348 505h6v6h-6zM348 522h6v6h-6zM352 475h6v6h-6zM353 476h6v6h-6zM351 502h6v6h-6zM352 507h6v6h-6zM352 518h6v6h-6zM351 502h6v6h-6zM355 476h6v6h-6zM356 475h6v6h-6zM357 479h6v6h-6zM356 518h6v6h-6zM355 502h6v6h-6zM356 515h6v6h-6zM359 475h6v6h-6zM359 475h6v6h-6zM360 479h6v6h-6zM360 507h6v6h-6zM359 508h6v6h-6zM359 507h6v6h-6zM360 503h6v6h-6zM364 475h6v6h-6zM364 481h6v6h-6zM363 513h6v6h-6zM363 513h6v6h-6zM363 516h6v6h-6zM367 476h6v6h-6zM368 476h6v6h-6zM366 479h6v6h-6zM368 501h6v6h-6zM368 524h6v6h-6zM367 513h6v6h-6zM367 500h6v6h-6zM371 476h6v6h-6zM370 476h6v6h-6zM372 477h6v6h-6zM371 509h6v6h-6zM370 511h6v6h-6zM370 517h6v6h-6zM374 476h6v6h-6zM376 476h6v6h-6zM374 476h6v6h-6zM374 507h6v6h-6zM375 524h6v6h-6zM374 519h6v6h-6zM378 476h6v6h-6zM378 476h6v6h-6zM379 477h6v6h-6zM378 521h6v6h-6zM378 508h6v6h-6zM379 518h6v6h-6zM378 500h6v6h-6zM382 476h6v6h-6zM383 476h6v6h-6zM383 481h6v6h-6zM382 517h6v6h-6zM382 512h6v6h-6zM383 499h6v6h-6zM385 476h6v6h-6zM387 476h6v6h-6zM386 482h6v6h-6zM385 510h6v6h-6zM387 500h6v6h-6zM386 511h6v6h-6zM386 504h6v6h-6zM390 476h6v6h-6zM390 476h6v6h-6zM390 480h6v6h-6zM389 499h6v6h-6zM390 524h6v6h-6zM390 509h6v6h-6zM389 508h6v6h-6zM394 476h6v6h-6zM393 476h6v6h-6zM394 478h6v6h-6zM393 499h6v6h-6zM394 504h6v6h-6zM394 509h6v6h-6zM394 521h6v6h-6zM397 476h6v6h-6zM398 476h6v6h-6zM397 482h6v6h-6zM398 511h6v6h-6zM397 508h6v6h-6zM398 498h6v6h-6zM400 475h6v6h-6zM402 475h6v6h-6zM402 479h6v6h-6zM402 512h6v6h-6zM401 498h6v6h-6zM401 507h6v6h-6zM400 498h6v6h-6zM405 475h6v6h-6zM405 475h6v6h-6zM404 480h6v6h-6zM405 517h6v6h-6zM406 498h6v6h-6zM405 508h6v6h-6zM404 509h6v6h-6zM408 475h6v6h-6zM409 475h6v6h-6zM409 476h6v6h-6zM408 515h6v6h-6zM408 517h6v6h-6zM408 518h6v6h-6zM408 506h6v6h-6zM413 475h6v6h-6zM413 475h6v6h-6zM413 478h6v6h-6zM413 512h6v6h-6zM412 504h6v6h-6zM412 500h6v6h-6zM412 503h6v6h-6zM416 475h6v6h-6zM417 475h6v6h-6zM416 480h6v6h-6zM416 510h6v6h-6zM417 502h6v6h-6zM417 506h6v6h-6zM419 475h6v6h-6zM421 475h6v6h-6zM419 476h6v6h-6zM419 504h6v6h-6zM420 504h6v6h-6zM421 501h6v6h-6zM421 517h6v6h-6zM423 500h6v6h-6zM425 506h6v6h-6zM423 498h6v6h-6zM424 514h6v6h-6zM428 504h6v6h-6zM428 520h6v6h-6zM428 517h6v6h-6zM427 503h6v6h-6zM431 519h6v6h-6zM432 508h6v6h-6zM431 515h6v6h-6zM432 513h6v6h-6zM436 506h6v6h-6zM435 510h6v6h-6zM435 504h6v6h-6zM435 517h6v6h-6zM439 503h6v6h-6zM440 503h6v6h-6zM439 500h6v6h-6zM440 517h6v6h-6zM444 500h6v6h-6zM444 512h6v6h-6zM442 509h6v6h-6zM443 508h6v6h-6zM446 498h6v6h-6zM446 509h6v6h-6zM448 500h6v6h-6zM447 511h6v6h-6zM450 501h6v6h-6zM451 512h6v6h-6zM451 507h6v6h-6zM454 513h6v6h-6zM455 524h6v6h-6zM455 524h6v6h-6zM458 510h6v6h-6zM457 511h6v6h-6zM459 519h6v6h-6zM458 513h6v6h-6zM462 499h6v6h-6zM461 510h6v6h-6zM463 505h6v6h-6zM466 473h6v6h-6zM465 472h6v6h-6zM465 479h6v6h-6zM466 515h6v6h-6zM465 522h6v6h-6zM467 512h6v6h-6zM470 473h6v6h-6zM470 473h6v6h-6zM470 480h6v6h-6zM469 516h6v6h-6zM469 504h6v6h-6zM469 510h6v6h-6zM474 474h6v6h-6zM473 474h6v6h-6zM474 475h6v6h-6zM473 510h6v6h-6zM474 510h6v6h-6zM473 523h6v6h-6zM474 513h6v6h-6zM476 475h6v6h-6zM476 473h6v6h-6zM478 476h6v6h-6zM477 506h6v6h-6zM478 503h6v6h-6zM478 517h6v6h-6zM482 474h6v6h-6zM481 474h6v6h-6zM481 474h6v6h-6zM481 515h6v6h-6zM481 504h6v6h-6zM481 500h6v6h-6zM485 475h6v6h-6zM484 474h6v6h-6zM486 477h6v6h-6zM485 502h6v6h-6zM486 502h6v6h-6zM485 514h6v6h-6zM489 474h6v6h-6zM489 479h6v6h-6zM489 525h6v6h-6zM489 509h6v6h-6zM489 515h6v6h-6zM492 475h6v6h-6zM492 475h6v6h-6zM493 476h6v6h-6zM493 512h6v6h-6zM493 502h6v6h-6zM493 502h6v6h-6zM496 476h6v6h-6zM496 475h6v6h-6zM497 477h6v6h-6zM495 519h6v6h-6zM497 503h6v6h-6zM496 506h6v6h-6zM501 475h6v6h-6zM500 476h6v6h-6zM499 525h6v6h-6zM499 503h6v6h-6zM500 518h6v6h-6zM505 476h6v6h-6zM505 476h6v6h-6zM504 480h6v6h-6zM504 505h6v6h-6zM504 509h6v6h-6zM503 505h6v6h-6zM507 476h6v6h-6zM507 476h6v6h-6zM507 477h6v6h-6zM507 517h6v6h-6zM508 522h6v6h-6zM512 476h6v6h-6zM512 477h6v6h-6zM512 514h6v6h-6zM512 504h6v6h-6zM512 513h6v6h-6zM516 475h6v6h-6zM516 476h6v6h-6zM515 477h6v6h-6zM515 504h6v6h-6zM516 506h6v6h-6zM516 503h6v6h-6zM519 475h6v6h-6zM519 475h6v6h-6zM520 478h6v6h-6zM518 520h6v6h-6zM520 510h6v6h-6zM520 503h6v6h-6zM522 476h6v6h-6zM523 476h6v6h-6zM523 475h6v6h-6zM522 518h6v6h-6zM523 504h6v6h-6zM523 507h6v6h-6zM526 474h6v6h-6zM526 474h6v6h-6zM527 480h6v6h-6zM526 503h6v6h-6zM527 503h6v6h-6zM526 511h6v6h-6zM531 476h6v6h-6zM531 476h6v6h-6zM530 501h6v6h-6zM529 514h6v6h-6zM531 519h6v6h-6zM535 474h6v6h-6zM534 475h6v6h-6zM535 479h6v6h-6zM533 510h6v6h-6zM535 519h6v6h-6zM534 519h6v6h-6zM538 475h6v6h-6zM538 476h6v6h-6zM537 474h6v6h-6zM538 508h6v6h-6zM539 512h6v6h-6zM538 502h6v6h-6zM538 504h6v6h-6zM541 476h6v6h-6zM541 475h6v6h-6zM542 478h6v6h-6zM542 517h6v6h-6zM542 516h6v6h-6zM543 501h6v6h-6zM546 476h6v6h-6zM545 483h6v6h-6zM545 503h6v6h-6zM546 510h6v6h-6zM547 505h6v6h-6zM550 476h6v6h-6zM549 474h6v6h-6zM550 482h6v6h-6zM549 518h6v6h-6zM550 522h6v6h-6zM550 503h6v6h-6zM550 509h6v6h-6zM553 475h6v6h-6zM554 474h6v6h-6zM553 506h6v6h-6zM553 506h6v6h-6zM553 507h6v6h-6zM557 475h6v6h-6zM557 474h6v6h-6zM558 484h6v6h-6zM558 474h6v6h-6zM556 509h6v6h-6zM558 515h6v6h-6zM557 499h6v6h-6zM558 519h6v6h-6zM561 475h6v6h-6zM561 476h6v6h-6zM560 509h6v6h-6zM562 500h6v6h-6zM561 500h6v6h-6zM561 509h6v6h-6zM564 477h6v6h-6zM565 477h6v6h-6zM565 480h6v6h-6zM565 515h6v6h-6zM564 502h6v6h-6zM565 502h6v6h-6zM564 504h6v6h-6zM568 475h6v6h-6zM569 474h6v6h-6zM569 480h6v6h-6zM569 501h6v6h-6zM568 507h6v6h-6zM569 510h6v6h-6zM572 475h6v6h-6zM571 476h6v6h-6zM571 478h6v6h-6zM572 504h6v6h-6zM573 505h6v6h-6zM572 512h6v6h-6zM572 519h6v6h-6zM576 476h6v6h-6zM576 478h6v6h-6zM575 502h6v6h-6zM576 522h6v6h-6zM576 520h6v6h-6zM575 508h6v6h-6zM580 477h6v6h-6zM579 475h6v6h-6zM579 505h6v6h-6zM580 514h6v6h-6zM579 503h6v6h-6zM580 502h6v6h-6zM585 479h6v6h-6zM584 476h6v6h-6zM583 480h6v6h-6zM584 502h6v6h-6zM584 518h6v6h-6zM584 507h6v6h-6zM584 510h6v6h-6zM588 477h6v6h-6zM587 475h6v6h-6zM588 475h6v6h-6zM587 501h6v6h-6zM588 503h6v6h-6zM587 503h6v6h-6zM587 502h6v6h-6zM592 475h6v6h-6zM592 477h6v6h-6zM591 502h6v6h-6zM592 511h6v6h-6zM592 509h6v6h-6zM591 523h6v6h-6zM596 477h6v6h-6zM596 477h6v6h-6zM595 502h6v6h-6zM595 518h6v6h-6zM596 505h6v6h-6zM596 516h6v6h-6zM598 479h6v6h-6zM599 476h6v6h-6zM600 482h6v6h-6zM600 502h6v6h-6zM600 508h6v6h-6zM598 503h6v6h-6zM600 520h6v6h-6zM602 479h6v6h-6zM603 477h6v6h-6zM602 503h6v6h-6zM602 503h6v6h-6zM602 505h6v6h-6zM603 503h6v6h-6zM606 478h6v6h-6zM607 478h6v6h-6zM606 480h6v6h-6zM607 523h6v6h-6zM607 507h6v6h-6zM607 516h6v6h-6zM607 503h6v6h-6zM610 481h6v6h-6zM610 479h6v6h-6zM611 503h6v6h-6zM611 505h6v6h-6zM609 509h6v6h-6zM610 508h6v6h-6zM613 479h6v6h-6zM614 477h6v6h-6zM615 480h6v6h-6zM613 502h6v6h-6zM615 503h6v6h-6zM615 505h6v6h-6zM618 477h6v6h-6zM618 477h6v6h-6zM617 479h6v6h-6zM618 506h6v6h-6zM618 518h6v6h-6zM618 504h6v6h-6zM619 524h6v6h-6zM621 482h6v6h-6zM622 481h6v6h-6zM621 479h6v6h-6zM622 514h6v6h-6zM622 506h6v6h-6zM621 517h6v6h-6zM626 479h6v6h-6zM626 483h6v6h-6zM625 512h6v6h-6zM626 506h6v6h-6zM625 506h6v6h-6zM629 481h6v6h-6zM629 477h6v6h-6zM630 478h6v6h-6zM629 516h6v6h-6zM630 520h6v6h-6zM630 525h6v6h-6zM632 482h6v6h-6zM633 479h6v6h-6zM633 479h6v6h-6zM633 519h6v6h-6zM634 512h6v6h-6zM637 483h6v6h-6zM636 480h6v6h-6zM637 481h6v6h-6zM637 516h6v6h-6zM638 525h6v6h-6zM641 483h6v6h-6zM640 480h6v6h-6zM640 480h6v6h-6zM640 515h6v6h-6zM640 512h6v6h-6zM641 519h6v6h-6zM645 484h6v6h-6zM644 482h6v6h-6zM645 479h6v6h-6zM644 514h6v6h-6zM645 512h6v6h-6zM645 515h6v6h-6zM648 480h6v6h-6zM648 482h6v6h-6zM648 482h6v6h-6zM648 521h6v6h-6zM647 515h6v6h-6zM653 481h6v6h-6zM652 478h6v6h-6zM652 481h6v6h-6zM652 515h6v6h-6zM652 515h6v6h-6zM655 483h6v6h-6zM655 480h6v6h-6zM655 516h6v6h-6zM655 521h6v6h-6zM659 478h6v6h-6zM660 478h6v6h-6zM659 514h6v6h-6zM660 518h6v6h-6zM664 485h6v6h-6zM663 479h6v6h-6zM664 484h6v6h-6zM664 520h6v6h-6zM663 523h6v6h-6zM666 477h6v6h-6zM667 482h6v6h-6zM668 482h6v6h-6zM668 525h6v6h-6zM668 521h6v6h-6zM670 482h6v6h-6zM671 479h6v6h-6zM671 480h6v6h-6zM671 519h6v6h-6zM672 516h6v6h-6zM672 515h6v6h-6zM676 482h6v6h-6zM675 477h6v6h-6zM674 483h6v6h-6zM675 517h6v6h-6zM676 515h6v6h-6zM679 480h6v6h-6zM678 478h6v6h-6zM679 485h6v6h-6zM678 477h6v6h-6zM678 519h6v6h-6zM678 513h6v6h-6zM678 522h6v6h-6zM681 485h6v6h-6zM682 479h6v6h-6zM682 479h6v6h-6zM682 512h6v6h-6zM683 517h6v6h-6zM682 518h6v6h-6zM686 483h6v6h-6zM686 485h6v6h-6zM687 481h6v6h-6zM687 510h6v6h-6zM687 514h6v6h-6zM685 524h6v6h-6zM689 484h6v6h-6zM689 476h6v6h-6zM690 484h6v6h-6zM691 521h6v6h-6zM689 509h6v6h-6zM691 523h6v6h-6zM694 480h6v6h-6zM693 478h6v6h-6zM694 480h6v6h-6zM694 482h6v6h-6zM695 519h6v6h-6zM694 510h6v6h-6zM694 513h6v6h-6zM698 477h6v6h-6zM697 478h6v6h-6zM699 478h6v6h-6zM697 511h6v6h-6zM698 509h6v6h-6zM698 521h6v6h-6zM698 518h6v6h-6zM702 487h6v6h-6zM702 476h6v6h-6zM701 482h6v6h-6zM701 519h6v6h-6zM701 516h6v6h-6zM702 518h6v6h-6zM701 516h6v6h-6zM705 475h6v6h-6zM705 478h6v6h-6zM705 518h6v6h-6zM705 515h6v6h-6zM705 516h6v6h-6zM710 475h6v6h-6zM708 486h6v6h-6zM710 484h6v6h-6zM708 487h6v6h-6zM708 517h6v6h-6zM709 520h6v6h-6zM710 512h6v6h-6zM712 481h6v6h-6zM714 485h6v6h-6zM713 476h6v6h-6zM713 484h6v6h-6zM713 519h6v6h-6zM713 512h6v6h-6zM712 515h6v6h-6zM717 478h6v6h-6zM718 489h6v6h-6zM717 484h6v6h-6zM716 521h6v6h-6zM716 516h6v6h-6zM717 519h6v6h-6zM720 486h6v6h-6zM721 485h6v6h-6zM721 475h6v6h-6zM719 483h6v6h-6zM720 515h6v6h-6zM721 517h6v6h-6zM720 516h6v6h-6zM724 487h6v6h-6zM725 478h6v6h-6zM724 481h6v6h-6zM724 490h6v6h-6zM725 519h6v6h-6zM725 520h6v6h-6zM725 519h6v6h-6zM727 482h6v6h-6zM728 478h6v6h-6zM728 486h6v6h-6zM728 479h6v6h-6zM728 519h6v6h-6zM728 519h6v6h-6zM731 485h6v6h-6zM732 483h6v6h-6zM732 486h6v6h-6zM732 492h6v6h-6zM732 518h6v6h-6zM733 515h6v6h-6zM733 521h6v6h-6zM736 492h6v6h-6zM736 477h6v6h-6zM735 482h6v6h-6zM737 487h6v6h-6zM735 515h6v6h-6zM735 513h6v6h-6zM739 482h6v6h-6zM739 483h6v6h-6zM739 478h6v6h-6zM739 477h6v6h-6zM739 523h6v6h-6zM740 516h6v6h-6zM744 487h6v6h-6zM743 489h6v6h-6zM744 494h6v6h-6zM744 483h6v6h-6zM742 480h6v6h-6zM743 517h6v6h-6zM744 521h6v6h-6zM746 485h6v6h-6zM746 489h6v6h-6zM748 478h6v6h-6zM747 484h6v6h-6zM747 481h6v6h-6zM746 524h6v6h-6zM747 523h6v6h-6zM747 514h6v6h-6zM752 482h6v6h-6zM750 490h6v6h-6zM751 483h6v6h-6zM752 481h6v6h-6zM750 478h6v6h-6zM750 514h6v6h-6zM752 518h6v6h-6zM755 489h6v6h-6zM755 484h6v6h-6zM754 474h6v6h-6zM754 493h6v6h-6zM754 476h6v6h-6zM754 517h6v6h-6zM755 523h6v6h-6zM759 491h6v6h-6zM759 474h6v6h-6zM759 484h6v6h-6zM759 487h6v6h-6zM757 475h6v6h-6zM758 517h6v6h-6zM758 516h6v6h-6zM763 483h6v6h-6zM762 487h6v6h-6zM763 478h6v6h-6zM762 482h6v6h-6zM763 481h6v6h-6zM762 516h6v6h-6zM762 525h6v6h-6zM767 482h6v6h-6zM767 492h6v6h-6zM765 492h6v6h-6zM765 479h6v6h-6zM765 483h6v6h-6zM766 488h6v6h-6zM765 519h6v6h-6zM765 516h6v6h-6zM766 523h6v6h-6zM770 497h6v6h-6zM770 482h6v6h-6zM769 493h6v6h-6zM770 494h6v6h-6zM769 479h6v6h-6zM769 495h6v6h-6zM770 516h6v6h-6zM770 521h6v6h-6zM773 487h6v6h-6zM775 493h6v6h-6zM774 492h6v6h-6zM773 488h6v6h-6zM774 491h6v6h-6zM774 521h6v6h-6zM773 516h6v6h-6zM773 521h6v6h-6zM778 497h6v6h-6zM778 492h6v6h-6zM778 474h6v6h-6zM777 477h6v6h-6zM778 480h6v6h-6zM778 489h6v6h-6zM777 520h6v6h-6zM778 517h6v6h-6zM781 480h6v6h-6zM781 480h6v6h-6zM781 498h6v6h-6zM781 493h6v6h-6zM782 494h6v6h-6zM781 496h6v6h-6zM780 472h6v6h-6zM781 519h6v6h-6zM781 523h6v6h-6zM786 481h6v6h-6zM785 477h6v6h-6zM785 473h6v6h-6zM785 479h6v6h-6zM785 480h6v6h-6zM785 523h6v6h-6zM785 523h6v6h-6zM789 487h6v6h-6zM788 486h6v6h-6zM789 493h6v6h-6zM789 478h6v6h-6zM788 475h6v6h-6zM789 475h6v6h-6zM789 492h6v6h-6zM789 518h6v6h-6zM789 519h6v6h-6zM793 482h6v6h-6zM793 476h6v6h-6zM793 488h6v6h-6zM792 478h6v6h-6zM792 475h6v6h-6zM792 489h6v6h-6zM793 524h6v6h-6zM793 521h6v6h-6zM797 473h6v6h-6zM796 494h6v6h-6zM797 482h6v6h-6zM797 499h6v6h-6zM797 477h6v6h-6zM796 492h6v6h-6zM797 493h6v6h-6zM797 519h6v6h-6zM800 496h6v6h-6zM801 496h6v6h-6zM801 501h6v6h-6zM800 484h6v6h-6zM800 473h6v6h-6zM799 485h6v6h-6zM800 521h6v6h-6zM804 473h6v6h-6zM804 488h6v6h-6zM803 496h6v6h-6zM804 492h6v6h-6zM805 501h6v6h-6zM803 491h6v6h-6zM803 522h6v6h-6zM808 479h6v6h-6zM807 491h6v6h-6zM808 495h6v6h-6zM809 500h6v6h-6zM808 483h6v6h-6zM808 487h6v6h-6zM808 493h6v6h-6zM812 495h6v6h-6zM811 500h6v6h-6zM812 477h6v6h-6zM812 500h6v6h-6zM811 485h6v6h-6zM812 484h6v6h-6zM812 500h6v6h-6zM811 525h6v6h-6zM815 489h6v6h-6zM816 475h6v6h-6zM816 490h6v6h-6zM815 497h6v6h-6zM815 496h6v6h-6zM815 479h6v6h-6zM815 526h6v6h-6zM818 493h6v6h-6zM818 490h6v6h-6zM818 489h6v6h-6zM819 500h6v6h-6zM819 487h6v6h-6zM818 499h6v6h-6zM819 487h6v6h-6zM824 489h6v6h-6zM824 484h6v6h-6zM822 493h6v6h-6zM822 501h6v6h-6zM822 500h6v6h-6zM822 486h6v6h-6zM824 525h6v6h-6z"/>
</g>
<path fill="#000" d="M63 122h767v1h-767zM829 122h1v413h-1zM63 122h2v413h-2zM63 533h767v2h-767z"/>
<rect x="823" y="125" width="4" height="4" fill="#C0C0C0"/>
</svg>
<div class="lbl" style="left:51px;top:118px;">2</div>
<div class="lbl" style="left:51px;top:321px;">1</div>
<div class="lbl" style="left:51px;top:524px;">0</div>
<div class="lbl" style="left:62px;top:541px;">0</div>
<div class="lbl" style="left:441px;top:541px;">1</div>
<div class="lbl" style="left:822px;top:541px;">2</div>
<div class="lbl" style="left:441px;top:555px;">X</div>
<div class="lbl" style="left:38px;top:323px;transform:rotate(-90deg);transform-origin:50% 50%">Y</div>
</div>
</body></html>
